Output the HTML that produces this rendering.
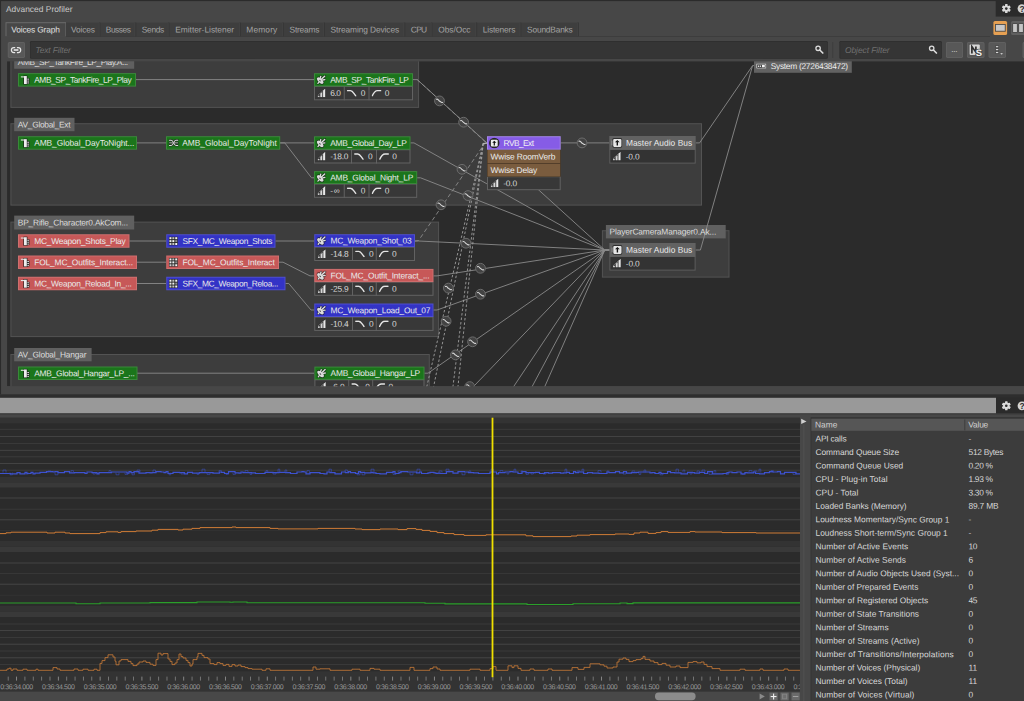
<!DOCTYPE html><html><head><meta charset='utf-8'><title>Advanced Profiler</title><style>

html,body{margin:0;padding:0;background:#484848;}
body{width:1024px;height:701px;overflow:hidden;position:relative;font-family:"Liberation Sans",sans-serif;font-size:8.4px;line-height:12px;}
#bg{position:absolute;left:0;top:0;}
.t{position:absolute;white-space:pre;height:12px;transform-origin:0 0;}
.clip{position:absolute;left:0;top:0;width:1024px;height:701px;}

</style></head><body>
<svg id='bg' width='1024' height='701' viewBox='0 0 1024 701'><rect x='0.00' y='0.00' width='1024.00' height='701.00' fill='#474747' />
<rect x='0.00' y='0.00' width='1024.00' height='1.10' fill='#2b2b2b' />
<rect x='0.00' y='0.00' width='1.05' height='394.30' fill='#2b2b2b' />
<rect x='995.70' y='0.00' width='28.30' height='16.60' fill='#2b2b2b' />
<g transform='translate(1006.3 8.6)'><rect x='-1.25' y='-4.50' width='2.5' height='2.8' rx='0.5' fill='#dadada' transform='rotate(0)'/><rect x='-1.25' y='-4.50' width='2.5' height='2.8' rx='0.5' fill='#dadada' transform='rotate(60)'/><rect x='-1.25' y='-4.50' width='2.5' height='2.8' rx='0.5' fill='#dadada' transform='rotate(120)'/><rect x='-1.25' y='-4.50' width='2.5' height='2.8' rx='0.5' fill='#dadada' transform='rotate(180)'/><rect x='-1.25' y='-4.50' width='2.5' height='2.8' rx='0.5' fill='#dadada' transform='rotate(240)'/><rect x='-1.25' y='-4.50' width='2.5' height='2.8' rx='0.5' fill='#dadada' transform='rotate(300)'/><circle r='3.20' fill='#dadada'/><circle r='1.3' fill='#2b2b2b'/></g>
<circle cx='1022' cy='8.6' r='4.4' fill='#d4d4d4'/>
<rect x='5.50' y='36.00' width='984.50' height='0.70' fill='#3a3a3a' />
<rect x='66.00' y='22.40' width='512.70' height='13.90' fill='#3e3e3e' />
<rect x='66.00' y='22.40' width='512.70' height='0.60' fill='#454545' />
<rect x='5.50' y='22.20' width='60.50' height='14.20' fill='#6a6a6a' />
<rect x='6.50' y='23.20' width='58.90' height='13.60' fill='#474747' />
<rect x='99.50' y='22.60' width='0.90' height='13.70' fill='#353535' />
<rect x='98.70' y='22.80' width='0.80' height='13.50' fill='#444444' />
<rect x='135.30' y='22.60' width='0.90' height='13.70' fill='#353535' />
<rect x='134.50' y='22.80' width='0.80' height='13.50' fill='#444444' />
<rect x='168.50' y='22.60' width='0.90' height='13.70' fill='#353535' />
<rect x='167.70' y='22.80' width='0.80' height='13.50' fill='#444444' />
<rect x='239.85' y='22.60' width='0.90' height='13.70' fill='#353535' />
<rect x='239.05' y='22.80' width='0.80' height='13.50' fill='#444444' />
<rect x='282.80' y='22.60' width='0.90' height='13.70' fill='#353535' />
<rect x='282.00' y='22.80' width='0.80' height='13.50' fill='#444444' />
<rect x='324.10' y='22.60' width='0.90' height='13.70' fill='#353535' />
<rect x='323.30' y='22.80' width='0.80' height='13.50' fill='#444444' />
<rect x='404.30' y='22.60' width='0.90' height='13.70' fill='#353535' />
<rect x='403.50' y='22.80' width='0.80' height='13.50' fill='#444444' />
<rect x='431.50' y='22.60' width='0.90' height='13.70' fill='#353535' />
<rect x='430.70' y='22.80' width='0.80' height='13.50' fill='#444444' />
<rect x='476.20' y='22.60' width='0.90' height='13.70' fill='#353535' />
<rect x='475.40' y='22.80' width='0.80' height='13.50' fill='#444444' />
<rect x='520.40' y='22.60' width='0.90' height='13.70' fill='#353535' />
<rect x='519.60' y='22.80' width='0.80' height='13.50' fill='#444444' />
<rect x='577.80' y='22.60' width='0.90' height='13.70' fill='#353535' />
<rect x='577.00' y='22.80' width='0.80' height='13.50' fill='#444444' />
<rect x='993.40' y='20.90' width='13.70' height='14.10' fill='#e6a052' rx='1.6' />
<rect x='995.00' y='24.00' width='10.70' height='7.70' fill='#4a4a4a' />
<rect x='995.90' y='24.90' width='8.90' height='5.90' fill='#c8c8c8' />
<rect x='1011.10' y='20.90' width='18.90' height='14.10' fill='#606060' rx='1.6' />
<rect x='1012.40' y='23.30' width='5.20' height='9.40' fill='#454545' />
<rect x='1013.10' y='24.00' width='3.80' height='8.00' fill='#c6c6c6' />
<rect x='1018.40' y='23.30' width='5.20' height='9.40' fill='#454545' />
<rect x='1019.10' y='24.00' width='3.80' height='8.00' fill='#c6c6c6' />
<rect x='7.80' y='42.10' width='17.20' height='15.80' fill='#636363' rx='1.6' />
<rect x='8.50' y='42.80' width='15.80' height='14.40' fill='#585858' rx='1.2' />
<g fill='none' stroke='#e6e6e6' stroke-width='1.25' stroke-linecap='butt'><path d='M15.2 47.5 H13.9 a2.5 2.5 0 0 0 0 5 H15.2'/><path d='M16.9 47.5 H18.2 a2.5 2.5 0 0 1 0 5 H16.9'/></g><path d='M13.7 50 H18.4' stroke='#f0f0f0' stroke-width='1.5'/>
<rect x='30.00' y='41.00' width='797.80' height='17.80' fill='#2e2e2e' rx='1.2' />
<rect x='30.70' y='41.70' width='796.40' height='16.40' fill='#353535' rx='0.8' />
<g transform='translate(819.4 49.6)'><circle cx='-1.3' cy='-1.3' r='2.2' fill='none' stroke='#dcdcdc' stroke-width='1.3'/><path d='M0.4 0.4 L3.4 3.4' stroke='#dcdcdc' stroke-width='1.7' stroke-linecap='round'/></g>
<rect x='832.30' y='42.00' width='0.90' height='16.00' fill='#3c3c3c' />
<rect x='839.40' y='41.00' width='102.40' height='17.80' fill='#2e2e2e' rx='1.2' />
<rect x='840.10' y='41.70' width='101.00' height='16.40' fill='#353535' rx='0.8' />
<g transform='translate(933 49.6)'><circle cx='-1.3' cy='-1.3' r='2.2' fill='none' stroke='#dcdcdc' stroke-width='1.3'/><path d='M0.4 0.4 L3.4 3.4' stroke='#dcdcdc' stroke-width='1.7' stroke-linecap='round'/></g>
<rect x='946.00' y='42.10' width='17.00' height='15.80' fill='#636363' rx='1.6' />
<rect x='946.70' y='42.80' width='15.60' height='14.40' fill='#585858' rx='1.2' />
<rect x='967.00' y='42.10' width='17.50' height='15.80' fill='#636363' rx='1.6' />
<rect x='967.70' y='42.80' width='16.10' height='14.40' fill='#585858' rx='1.2' />
<rect x='988.60' y='42.10' width='17.40' height='15.80' fill='#636363' rx='1.6' />
<rect x='989.30' y='42.80' width='16.00' height='14.40' fill='#585858' rx='1.2' />
<rect x='1022.60' y='42.10' width='17.40' height='15.80' fill='#636363' rx='1.6' />
<rect x='1023.30' y='42.80' width='16.00' height='14.40' fill='#585858' rx='1.2' />
<rect x='969.6' y='44.6' width='10.2' height='10.3' fill='#d6d6d6' rx='1'/><path d='M971.9 53.4 V46.6 L975.9 52.2 V46.4' fill='none' stroke='#2e2e2e' stroke-width='1.7' stroke-linejoin='miter'/>
<text x='975.7' y='56.1' font-family='Liberation Sans, sans-serif' font-weight='bold' font-size='9.4' fill='#f2f2f2' stroke='#4a4a4a' stroke-width='1.6' paint-order='stroke' transform='rotate(0.03 975 56)'>S</text>
<rect x='995.30' y='45.60' width='3.60' height='2.20' fill='#3c3c3c' />
<rect x='995.90' y='46.10' width='2.40' height='1.20' fill='#d6d6d6' />
<rect x='995.30' y='48.50' width='3.60' height='2.20' fill='#3c3c3c' />
<rect x='995.90' y='49.00' width='2.40' height='1.20' fill='#d6d6d6' />
<rect x='995.30' y='51.40' width='3.60' height='2.20' fill='#3c3c3c' />
<rect x='995.90' y='51.90' width='2.40' height='1.20' fill='#d6d6d6' />
<path d='M999.9 52.9 H1003.3 L1001.6 54.9 Z' fill='#e0e0e0' stroke='#484848' stroke-width='0.4'/>
<clipPath id='gc'><rect x='7.05' y='61.2' width='1016.95' height='325.0'/></clipPath><g clip-path='url(#gc)'>
<rect x='7.05' y='61.20' width='1016.95' height='325.00' fill='#2b2b2b' />
<rect x='10.40' y='40.00' width='408.70' height='67.90' fill='#535353' />
<rect x='11.40' y='41.00' width='406.70' height='65.90' fill='#3d3d3d' />
<rect x='14.20' y='55.30' width='120.00' height='13.45' fill='#606060' />
<rect x='10.40' y='123.20' width='691.60' height='82.40' fill='#535353' />
<rect x='11.40' y='124.20' width='689.60' height='80.40' fill='#3d3d3d' />
<rect x='14.20' y='117.80' width='60.30' height='13.40' fill='#606060' />
<rect x='10.40' y='221.60' width='428.70' height='115.50' fill='#535353' />
<rect x='11.40' y='222.60' width='426.70' height='113.50' fill='#3d3d3d' />
<rect x='14.20' y='215.60' width='120.00' height='13.90' fill='#606060' />
<rect x='10.40' y='354.00' width='419.40' height='66.00' fill='#535353' />
<rect x='11.40' y='355.00' width='417.40' height='64.00' fill='#3d3d3d' />
<rect x='14.20' y='348.00' width='77.40' height='13.30' fill='#606060' />
<rect x='601.90' y='230.20' width='127.60' height='47.40' fill='#535353' />
<rect x='602.90' y='231.20' width='125.60' height='45.40' fill='#3d3d3d' />
<rect x='605.90' y='225.00' width='119.80' height='13.40' fill='#606060' />
<path d='M136.0 79.6 L314.0 79.6' fill='none' stroke='#8a8a8a' stroke-width='0.9' />
<path d='M137.0 142.9 L166.0 142.9' fill='none' stroke='#8a8a8a' stroke-width='0.9' />
<path d='M280.0 142.9 L314.0 142.9' fill='none' stroke='#8a8a8a' stroke-width='0.9' />
<path d='M280.0 142.9 L284.8 142.9 L311.5 177.8 L314.0 177.8' fill='none' stroke='#8a8a8a' stroke-width='0.9' />
<path d='M129.5 241.0 L166.0 241.0' fill='none' stroke='#8a8a8a' stroke-width='0.9' />
<path d='M137.0 262.2 L166.0 262.2' fill='none' stroke='#8a8a8a' stroke-width='0.9' />
<path d='M137.0 283.5 L166.0 283.5' fill='none' stroke='#8a8a8a' stroke-width='0.9' />
<path d='M275.5 241.0 L314.0 241.0' fill='none' stroke='#8a8a8a' stroke-width='0.9' />
<path d='M279.0 262.2 L283.0 262.2 L310.0 275.9 L314.0 275.9' fill='none' stroke='#8a8a8a' stroke-width='0.9' />
<path d='M285.5 283.5 L288.8 283.5 L311.0 310.0 L314.0 310.0' fill='none' stroke='#8a8a8a' stroke-width='0.9' />
<path d='M137.0 373.2 L314.0 373.2' fill='none' stroke='#8a8a8a' stroke-width='0.9' />
<path d='M413.0 79.6 L417.2 79.6 L604.8 250.0 L609.5 250.0' fill='none' stroke='#8a8a8a' stroke-width='0.9' />
<path d='M410.5 142.9 L414.0 142.9 L604.8 250.0 L609.5 250.0' fill='none' stroke='#8a8a8a' stroke-width='0.9' />
<path d='M417.2 177.8 L420.5 177.8 L604.8 250.0 L609.5 250.0' fill='none' stroke='#8a8a8a' stroke-width='0.9' />
<path d='M415.0 241.0 L418.5 241.0 L604.8 250.0 L609.5 250.0' fill='none' stroke='#8a8a8a' stroke-width='0.9' />
<path d='M433.5 275.9 L437.0 275.9 L604.8 250.0 L609.5 250.0' fill='none' stroke='#8a8a8a' stroke-width='0.9' />
<path d='M433.5 310.0 L437.0 310.0 L604.8 250.0 L609.5 250.0' fill='none' stroke='#8a8a8a' stroke-width='0.9' />
<path d='M424.5 373.2 L428.0 373.2 L604.8 250.0 L609.5 250.0' fill='none' stroke='#8a8a8a' stroke-width='0.9' />
<path d='M434.8 426.8 L604.8 250.0' fill='none' stroke='#8a8a8a' stroke-width='0.9' />
<path d='M486.8 426.8 L604.8 250.0' fill='none' stroke='#8a8a8a' stroke-width='0.9' />
<path d='M510.7 426.8 L604.8 250.0' fill='none' stroke='#8a8a8a' stroke-width='0.9' />
<path d='M527.1 426.8 L604.8 250.0' fill='none' stroke='#8a8a8a' stroke-width='0.9' />
<path d='M560.7 142.9 L609.5 142.9' fill='none' stroke='#8a8a8a' stroke-width='0.9' />
<path d='M695.6 142.9 L699.6 142.9 L752.6 65.6 L754.5 65.6' fill='none' stroke='#8a8a8a' stroke-width='0.9' />
<path d='M695.6 250.0 L700.4 250.0 L752.6 65.6' fill='none' stroke='#8a8a8a' stroke-width='0.9' />
<path d='M417.2 79.6 L485.0 141.6 L487.5 141.6' fill='none' stroke='#8c8c8c' stroke-width='0.9' stroke-dasharray='4.2 2.6' />
<path d='M415.0 241.0 L418.5 240.6 L485.0 143.0 L487.5 143.0' fill='none' stroke='#8c8c8c' stroke-width='0.9' stroke-dasharray='4.2 2.8' />
<path d='M483.2 143.4 L421.3 410.3' fill='none' stroke='#a0a0a0' stroke-width='0.9' stroke-dasharray='2.5 2.0' />
<path d='M483.2 143.4 L428.8 410.3' fill='none' stroke='#a0a0a0' stroke-width='0.9' stroke-dasharray='2.5 2.0' />
<path d='M483.2 143.4 L450.0 410.3' fill='none' stroke='#a0a0a0' stroke-width='0.9' stroke-dasharray='2.5 2.0' />
<path d='M483.2 143.4 L455.5 410.3' fill='none' stroke='#a0a0a0' stroke-width='0.9' stroke-dasharray='2.5 2.0' />
<path d='M483.2 143.4 L487.5 143.2' fill='none' stroke='#bdbdbd' stroke-width='1' />
<g transform='translate(439.5 100.9)'><circle r='4.9' fill='#434343' stroke='#6c6c6c' stroke-width='1'/><path d='M-3 -1.6 C-1.4 -2.6 -0.6 0.2 0 0.2 C0.8 0.2 1.6 2.4 3.1 1.5' fill='none' stroke='#dcdcdc' stroke-width='1.05' stroke-linecap='round'/></g>
<g transform='translate(463.6 122.2)'><circle r='4.9' fill='#434343' stroke='#6c6c6c' stroke-width='1'/><path d='M-3 -1.6 C-1.4 -2.6 -0.6 0.2 0 0.2 C0.8 0.2 1.6 2.4 3.1 1.5' fill='none' stroke='#dcdcdc' stroke-width='1.05' stroke-linecap='round'/></g>
<g transform='translate(462.0 169.3)'><circle r='4.9' fill='#434343' stroke='#6c6c6c' stroke-width='1'/><path d='M-3 -1.6 C-1.4 -2.6 -0.6 0.2 0 0.2 C0.8 0.2 1.6 2.4 3.1 1.5' fill='none' stroke='#dcdcdc' stroke-width='1.05' stroke-linecap='round'/></g>
<g transform='translate(468.0 195.6)'><circle r='4.9' fill='#434343' stroke='#6c6c6c' stroke-width='1'/><path d='M-3 -1.6 C-1.4 -2.6 -0.6 0.2 0 0.2 C0.8 0.2 1.6 2.4 3.1 1.5' fill='none' stroke='#dcdcdc' stroke-width='1.05' stroke-linecap='round'/></g>
<g transform='translate(441.0 204.8)'><circle r='4.9' fill='#434343' stroke='#6c6c6c' stroke-width='1'/><path d='M-3 -1.6 C-1.4 -2.6 -0.6 0.2 0 0.2 C0.8 0.2 1.6 2.4 3.1 1.5' fill='none' stroke='#dcdcdc' stroke-width='1.05' stroke-linecap='round'/></g>
<g transform='translate(582.0 142.9)'><circle r='4.9' fill='#434343' stroke='#6c6c6c' stroke-width='1'/><path d='M-3 -1.6 C-1.4 -2.6 -0.6 0.2 0 0.2 C0.8 0.2 1.6 2.4 3.1 1.5' fill='none' stroke='#dcdcdc' stroke-width='1.05' stroke-linecap='round'/></g>
<g transform='translate(466.0 243.2)'><circle r='4.9' fill='#434343' stroke='#6c6c6c' stroke-width='1'/><path d='M-3 -1.6 C-1.4 -2.6 -0.6 0.2 0 0.2 C0.8 0.2 1.6 2.4 3.1 1.5' fill='none' stroke='#dcdcdc' stroke-width='1.05' stroke-linecap='round'/></g>
<g transform='translate(480.5 268.3)'><circle r='4.9' fill='#434343' stroke='#6c6c6c' stroke-width='1'/><path d='M-3 -1.6 C-1.4 -2.6 -0.6 0.2 0 0.2 C0.8 0.2 1.6 2.4 3.1 1.5' fill='none' stroke='#dcdcdc' stroke-width='1.05' stroke-linecap='round'/></g>
<g transform='translate(448.4 288.1)'><circle r='4.9' fill='#434343' stroke='#6c6c6c' stroke-width='1'/><path d='M-3 -1.6 C-1.4 -2.6 -0.6 0.2 0 0.2 C0.8 0.2 1.6 2.4 3.1 1.5' fill='none' stroke='#dcdcdc' stroke-width='1.05' stroke-linecap='round'/></g>
<g transform='translate(480.5 294.2)'><circle r='4.9' fill='#434343' stroke='#6c6c6c' stroke-width='1'/><path d='M-3 -1.6 C-1.4 -2.6 -0.6 0.2 0 0.2 C0.8 0.2 1.6 2.4 3.1 1.5' fill='none' stroke='#dcdcdc' stroke-width='1.05' stroke-linecap='round'/></g>
<g transform='translate(446.1 321.2)'><circle r='4.9' fill='#434343' stroke='#6c6c6c' stroke-width='1'/><path d='M-3 -1.6 C-1.4 -2.6 -0.6 0.2 0 0.2 C0.8 0.2 1.6 2.4 3.1 1.5' fill='none' stroke='#dcdcdc' stroke-width='1.05' stroke-linecap='round'/></g>
<g transform='translate(472.6 341.8)'><circle r='4.9' fill='#434343' stroke='#6c6c6c' stroke-width='1'/><path d='M-3 -1.6 C-1.4 -2.6 -0.6 0.2 0 0.2 C0.8 0.2 1.6 2.4 3.1 1.5' fill='none' stroke='#dcdcdc' stroke-width='1.05' stroke-linecap='round'/></g>
<g transform='translate(455.5 354.9)'><circle r='4.9' fill='#434343' stroke='#6c6c6c' stroke-width='1'/><path d='M-3 -1.6 C-1.4 -2.6 -0.6 0.2 0 0.2 C0.8 0.2 1.6 2.4 3.1 1.5' fill='none' stroke='#dcdcdc' stroke-width='1.05' stroke-linecap='round'/></g>
<g transform='translate(469.7 386.6)'><circle r='4.9' fill='#434343' stroke='#6c6c6c' stroke-width='1'/><path d='M-3 -1.6 C-1.4 -2.6 -0.6 0.2 0 0.2 C0.8 0.2 1.6 2.4 3.1 1.5' fill='none' stroke='#dcdcdc' stroke-width='1.05' stroke-linecap='round'/></g>
<rect x='18.00' y='73.10' width='118.00' height='13.50' fill='#3a883a' />
<rect x='19.00' y='74.10' width='116.00' height='11.50' fill='#1b751b' />
<svg x='20.40' y='74.95' width="10" height="10" viewBox="0 0 10 10" ><rect x='3' y='0.6' width='4' height='9' fill='#1c1c1c'/><rect x='3.6' y='1.1' width='2.8' height='8' fill='#ededed'/><rect x='0.4' y='1.4' width='3.2' height='1.1' fill='#e0e0e0'/><rect x='6.6' y='3.2' width='2.4' height='5.8' fill='#1c1c1c'/><rect x='6.9' y='3.7' width='1.7' height='1' fill='#dcdcdc'/><rect x='6.9' y='5.6' width='1.7' height='1' fill='#dcdcdc'/><rect x='6.9' y='7.5' width='1.7' height='1' fill='#dcdcdc'/></svg>
<rect x='314.00' y='85.90' width='99.00' height='14.40' fill='#626262' />
<rect x='315.00' y='86.90' width='97.00' height='12.40' fill='#383838' />
<rect x='343.75' y='86.40' width='1.00' height='13.90' fill='#626262' />
<rect x='368.50' y='86.40' width='1.00' height='13.90' fill='#626262' />
<svg x='317.60' y='88.55' width="8" height="8.8" viewBox="0 0 8 8.8" ><g transform='scale(1 1.1)'><path d='M-0.5 8.5 L-0.5 5.9 L5.2 1.0 L8.3 -0.7 L8.3 8.5 Z' fill='#1e1e1e' opacity='0.4'/><path d='M0 8 L0 6.5 L1.9 6.5 L1.9 8 Z' fill='#c8c8c8'/><path d='M2.7 8 L2.7 4.6 L4.7 3.2 L4.7 8 Z' fill='#d6d6d6'/><path d='M5.5 8 L5.5 1.8 L7.7 0 L7.7 8 Z' fill='#e8e8e8'/><path d='M0 6.4 L5.6 1.7' stroke='#c8c8c8' stroke-width='0.4'/></g></svg>
<svg x='346.85' y='89.65' width="10" height="7" viewBox="0 0 10 7" ><path d='M0.6 1.0 H3.6 C5.8 1.0 6.4 3.0 8.9 6.2' fill='none' stroke='#e4e4e4' stroke-width='1.4' stroke-linecap='round'/></svg>
<svg x='371.60' y='89.65' width="10" height="7" viewBox="0 0 10 7" ><path d='M0.7 6.2 C2.2 2.6 3.6 1.0 6 1.0 H9.2' fill='none' stroke='#e4e4e4' stroke-width='1.4' stroke-linecap='round'/></svg>
<rect x='314.00' y='73.20' width='99.00' height='13.20' fill='#3a883a' />
<rect x='315.00' y='74.20' width='97.00' height='11.20' fill='#1b751b' />
<svg x='316.40' y='74.90' width="10" height="10" viewBox="0 0 10 10" ><g opacity='0.7'><ellipse cx='3.8' cy='5.7' rx='4.1' ry='2.0' transform='rotate(45 3.8 5.7)' fill='#1b1b1b' stroke='#1b1b1b' stroke-width='1.5'/><path d='M5.0 4.4 L8.3 1.3' stroke='#1b1b1b' stroke-width='2.8' stroke-linecap='round'/><path d='M3.7 3.6 L4.4 1.4' stroke='#1b1b1b' stroke-width='2.4' stroke-linecap='round'/><path d='M6.3 5.1 L8.5 4.7' stroke='#1b1b1b' stroke-width='2.4' stroke-linecap='round'/><path d='M2.4 7.4 L1.5 8.5' stroke='#1b1b1b' stroke-width='2.4' stroke-linecap='round'/></g><ellipse cx='3.8' cy='5.7' rx='4.1' ry='2.0' transform='rotate(45 3.8 5.7)' fill='#dcdcdc'/><path d='M5.0 4.4 L8.3 1.3' stroke='#dedede' stroke-width='1.4' stroke-linecap='round'/><path d='M3.7 3.6 L4.4 1.4' stroke='#dedede' stroke-width='1.3' stroke-linecap='round'/><path d='M6.3 5.1 L8.5 4.7' stroke='#dedede' stroke-width='1.3' stroke-linecap='round'/><path d='M2.4 7.4 L1.5 8.5' stroke='#dedede' stroke-width='1.3' stroke-linecap='round'/><ellipse cx='3.6' cy='5.7' rx='1.0' ry='0.6' transform='rotate(45 3.6 5.7)' fill='#4a4a4a'/></svg>
<rect x='18.00' y='136.20' width='119.00' height='13.50' fill='#3a883a' />
<rect x='19.00' y='137.20' width='117.00' height='11.50' fill='#1b751b' />
<svg x='20.40' y='138.05' width="10" height="10" viewBox="0 0 10 10" ><rect x='3' y='0.6' width='4' height='9' fill='#1c1c1c'/><rect x='3.6' y='1.1' width='2.8' height='8' fill='#ededed'/><rect x='0.4' y='1.4' width='3.2' height='1.1' fill='#e0e0e0'/><rect x='6.6' y='3.2' width='2.4' height='5.8' fill='#1c1c1c'/><rect x='6.9' y='3.7' width='1.7' height='1' fill='#dcdcdc'/><rect x='6.9' y='5.6' width='1.7' height='1' fill='#dcdcdc'/><rect x='6.9' y='7.5' width='1.7' height='1' fill='#dcdcdc'/></svg>
<rect x='166.00' y='136.20' width='114.20' height='13.50' fill='#3a883a' />
<rect x='167.00' y='137.20' width='112.20' height='11.50' fill='#1b751b' />
<svg x='168.60' y='139.05' width="10" height="8" viewBox="0 0 10 8" ><g fill='none' stroke='#222' stroke-width='2.3' stroke-linecap='round' opacity='0.8'><path d='M0.8 1.2 H2.6 C5 1.2 5 6.4 7.4 6.4 H9.2'/><path d='M0.8 6.4 H2.6 C5 6.4 5 1.2 7.4 1.2 H9.2'/><path d='M0.6 3.8 H9.4'/></g><g fill='none' stroke='#dadada' stroke-width='1.05' stroke-linecap='round'><path d='M0.8 1.2 H2.6 C5 1.2 5 6.4 7.4 6.4 H9.2'/><path d='M0.8 6.4 H2.6 C5 6.4 5 1.2 7.4 1.2 H9.2'/></g><path d='M0.6 3.8 H9.4' stroke='#b8b8b8' stroke-width='0.9'/></svg>
<rect x='314.00' y='149.25' width='96.50' height='14.25' fill='#626262' />
<rect x='315.00' y='150.25' width='94.50' height='12.25' fill='#383838' />
<rect x='351.00' y='149.75' width='1.00' height='13.75' fill='#626262' />
<rect x='376.00' y='149.75' width='1.00' height='13.75' fill='#626262' />
<svg x='317.60' y='151.82' width="8" height="8.8" viewBox="0 0 8 8.8" ><g transform='scale(1 1.1)'><path d='M-0.5 8.5 L-0.5 5.9 L5.2 1.0 L8.3 -0.7 L8.3 8.5 Z' fill='#1e1e1e' opacity='0.4'/><path d='M0 8 L0 6.5 L1.9 6.5 L1.9 8 Z' fill='#c8c8c8'/><path d='M2.7 8 L2.7 4.6 L4.7 3.2 L4.7 8 Z' fill='#d6d6d6'/><path d='M5.5 8 L5.5 1.8 L7.7 0 L7.7 8 Z' fill='#e8e8e8'/><path d='M0 6.4 L5.6 1.7' stroke='#c8c8c8' stroke-width='0.4'/></g></svg>
<svg x='354.10' y='152.93' width="10" height="7" viewBox="0 0 10 7" ><path d='M0.6 1.0 H3.6 C5.8 1.0 6.4 3.0 8.9 6.2' fill='none' stroke='#e4e4e4' stroke-width='1.4' stroke-linecap='round'/></svg>
<svg x='379.10' y='152.93' width="10" height="7" viewBox="0 0 10 7" ><path d='M0.7 6.2 C2.2 2.6 3.6 1.0 6 1.0 H9.2' fill='none' stroke='#e4e4e4' stroke-width='1.4' stroke-linecap='round'/></svg>
<rect x='314.00' y='136.30' width='96.50' height='13.45' fill='#3a883a' />
<rect x='315.00' y='137.30' width='94.50' height='11.45' fill='#1b751b' />
<svg x='316.40' y='138.12' width="10" height="10" viewBox="0 0 10 10" ><g opacity='0.7'><ellipse cx='3.8' cy='5.7' rx='4.1' ry='2.0' transform='rotate(45 3.8 5.7)' fill='#1b1b1b' stroke='#1b1b1b' stroke-width='1.5'/><path d='M5.0 4.4 L8.3 1.3' stroke='#1b1b1b' stroke-width='2.8' stroke-linecap='round'/><path d='M3.7 3.6 L4.4 1.4' stroke='#1b1b1b' stroke-width='2.4' stroke-linecap='round'/><path d='M6.3 5.1 L8.5 4.7' stroke='#1b1b1b' stroke-width='2.4' stroke-linecap='round'/><path d='M2.4 7.4 L1.5 8.5' stroke='#1b1b1b' stroke-width='2.4' stroke-linecap='round'/></g><ellipse cx='3.8' cy='5.7' rx='4.1' ry='2.0' transform='rotate(45 3.8 5.7)' fill='#dcdcdc'/><path d='M5.0 4.4 L8.3 1.3' stroke='#dedede' stroke-width='1.4' stroke-linecap='round'/><path d='M3.7 3.6 L4.4 1.4' stroke='#dedede' stroke-width='1.3' stroke-linecap='round'/><path d='M6.3 5.1 L8.5 4.7' stroke='#dedede' stroke-width='1.3' stroke-linecap='round'/><path d='M2.4 7.4 L1.5 8.5' stroke='#dedede' stroke-width='1.3' stroke-linecap='round'/><ellipse cx='3.6' cy='5.7' rx='1.0' ry='0.6' transform='rotate(45 3.6 5.7)' fill='#4a4a4a'/></svg>
<rect x='314.00' y='183.55' width='103.20' height='14.25' fill='#626262' />
<rect x='315.00' y='184.55' width='101.20' height='12.25' fill='#383838' />
<rect x='343.75' y='184.05' width='1.00' height='13.75' fill='#626262' />
<rect x='368.50' y='184.05' width='1.00' height='13.75' fill='#626262' />
<svg x='317.60' y='186.12' width="8" height="8.8" viewBox="0 0 8 8.8" ><g transform='scale(1 1.1)'><path d='M-0.5 8.5 L-0.5 5.9 L5.2 1.0 L8.3 -0.7 L8.3 8.5 Z' fill='#1e1e1e' opacity='0.4'/><path d='M0 8 L0 6.5 L1.9 6.5 L1.9 8 Z' fill='#c8c8c8'/><path d='M2.7 8 L2.7 4.6 L4.7 3.2 L4.7 8 Z' fill='#d6d6d6'/><path d='M5.5 8 L5.5 1.8 L7.7 0 L7.7 8 Z' fill='#e8e8e8'/><path d='M0 6.4 L5.6 1.7' stroke='#c8c8c8' stroke-width='0.4'/></g></svg>
<svg x='346.85' y='187.22' width="10" height="7" viewBox="0 0 10 7" ><path d='M0.6 1.0 H3.6 C5.8 1.0 6.4 3.0 8.9 6.2' fill='none' stroke='#e4e4e4' stroke-width='1.4' stroke-linecap='round'/></svg>
<svg x='371.60' y='187.22' width="10" height="7" viewBox="0 0 10 7" ><path d='M0.7 6.2 C2.2 2.6 3.6 1.0 6 1.0 H9.2' fill='none' stroke='#e4e4e4' stroke-width='1.4' stroke-linecap='round'/></svg>
<rect x='314.00' y='171.10' width='103.20' height='12.95' fill='#3a883a' />
<rect x='315.00' y='172.10' width='101.20' height='10.95' fill='#1b751b' />
<svg x='316.40' y='172.67' width="10" height="10" viewBox="0 0 10 10" ><g opacity='0.7'><ellipse cx='3.8' cy='5.7' rx='4.1' ry='2.0' transform='rotate(45 3.8 5.7)' fill='#1b1b1b' stroke='#1b1b1b' stroke-width='1.5'/><path d='M5.0 4.4 L8.3 1.3' stroke='#1b1b1b' stroke-width='2.8' stroke-linecap='round'/><path d='M3.7 3.6 L4.4 1.4' stroke='#1b1b1b' stroke-width='2.4' stroke-linecap='round'/><path d='M6.3 5.1 L8.5 4.7' stroke='#1b1b1b' stroke-width='2.4' stroke-linecap='round'/><path d='M2.4 7.4 L1.5 8.5' stroke='#1b1b1b' stroke-width='2.4' stroke-linecap='round'/></g><ellipse cx='3.8' cy='5.7' rx='4.1' ry='2.0' transform='rotate(45 3.8 5.7)' fill='#dcdcdc'/><path d='M5.0 4.4 L8.3 1.3' stroke='#dedede' stroke-width='1.4' stroke-linecap='round'/><path d='M3.7 3.6 L4.4 1.4' stroke='#dedede' stroke-width='1.3' stroke-linecap='round'/><path d='M6.3 5.1 L8.5 4.7' stroke='#dedede' stroke-width='1.3' stroke-linecap='round'/><path d='M2.4 7.4 L1.5 8.5' stroke='#dedede' stroke-width='1.3' stroke-linecap='round'/><ellipse cx='3.6' cy='5.7' rx='1.0' ry='0.6' transform='rotate(45 3.6 5.7)' fill='#4a4a4a'/></svg>
<rect x='487.00' y='176.20' width='73.70' height='14.00' fill='#626262' />
<rect x='488.00' y='177.20' width='71.70' height='12.00' fill='#383838' />
<svg x='490.70' y='178.40' width="8" height="8.8" viewBox="0 0 8 8.8" ><g transform='scale(1 1.1)'><path d='M-0.5 8.5 L-0.5 5.9 L5.2 1.0 L8.3 -0.7 L8.3 8.5 Z' fill='#1e1e1e' opacity='0.4'/><path d='M0 8 L0 6.5 L1.9 6.5 L1.9 8 Z' fill='#c8c8c8'/><path d='M2.7 8 L2.7 4.6 L4.7 3.2 L4.7 8 Z' fill='#d6d6d6'/><path d='M5.5 8 L5.5 1.8 L7.7 0 L7.7 8 Z' fill='#e8e8e8'/><path d='M0 6.4 L5.6 1.7' stroke='#c8c8c8' stroke-width='0.4'/></g></svg>
<rect x='487.00' y='149.40' width='73.70' height='27.40' fill='#4a3826' />
<rect x='487.60' y='150.00' width='72.50' height='13.00' fill='#7a5c3e' />
<rect x='487.60' y='163.80' width='72.50' height='12.60' fill='#7a5c3e' />
<rect x='487.00' y='136.20' width='73.70' height='13.50' fill='#a484ec' />
<rect x='488.00' y='137.20' width='71.70' height='11.50' fill='#865ce6' />
<svg x='488.80' y='137.50' width="11" height="11" viewBox="0 0 11 11" ><circle cx='5.5' cy='5.5' r='5.3' fill='#262626'/><rect x='2.1' y='2.3' width='6.8' height='6.6' rx='1' fill='#efefef'/><path d='M5.5 3.2 L7.6 5.3 H6.1 V8 H4.9 V5.3 H3.4 Z' fill='#111'/></svg>
<rect x='609.30' y='149.00' width='86.40' height='14.60' fill='#5c5c5c' />
<rect x='610.30' y='150.00' width='84.40' height='12.60' fill='#333333' />
<svg x='612.90' y='151.70' width="8" height="8.8" viewBox="0 0 8 8.8" ><g transform='scale(1 1.1)'><path d='M-0.5 8.5 L-0.5 5.9 L5.2 1.0 L8.3 -0.7 L8.3 8.5 Z' fill='#1e1e1e' opacity='0.4'/><path d='M0 8 L0 6.5 L1.9 6.5 L1.9 8 Z' fill='#c8c8c8'/><path d='M2.7 8 L2.7 4.6 L4.7 3.2 L4.7 8 Z' fill='#d6d6d6'/><path d='M5.5 8 L5.5 1.8 L7.7 0 L7.7 8 Z' fill='#e8e8e8'/><path d='M0 6.4 L5.6 1.7' stroke='#c8c8c8' stroke-width='0.4'/></g></svg>
<rect x='609.30' y='136.00' width='86.40' height='13.50' fill='#626262' />
<svg x='611.50' y='137.90' width="11" height="10" viewBox="0 0 11 10" ><rect x='0' y='2.6' width='2' height='4.8' fill='#d8d8d8'/><rect x='0.8' y='0.2' width='10' height='9.6' rx='1.6' fill='#303030'/><rect x='1.7' y='1.0' width='8.2' height='8.0' rx='1.1' fill='#e6e6e6'/><path d='M5.8 2.0 L8.2 4.4 H6.5 V7.6 H5.1 V4.4 H3.4 Z' fill='#151515'/></svg>
<rect x='609.40' y='256.00' width='86.20' height='14.60' fill='#5c5c5c' />
<rect x='610.40' y='257.00' width='84.20' height='12.60' fill='#333333' />
<svg x='613.00' y='258.70' width="8" height="8.8" viewBox="0 0 8 8.8" ><g transform='scale(1 1.1)'><path d='M-0.5 8.5 L-0.5 5.9 L5.2 1.0 L8.3 -0.7 L8.3 8.5 Z' fill='#1e1e1e' opacity='0.4'/><path d='M0 8 L0 6.5 L1.9 6.5 L1.9 8 Z' fill='#c8c8c8'/><path d='M2.7 8 L2.7 4.6 L4.7 3.2 L4.7 8 Z' fill='#d6d6d6'/><path d='M5.5 8 L5.5 1.8 L7.7 0 L7.7 8 Z' fill='#e8e8e8'/><path d='M0 6.4 L5.6 1.7' stroke='#c8c8c8' stroke-width='0.4'/></g></svg>
<rect x='609.40' y='243.00' width='86.20' height='13.50' fill='#626262' />
<svg x='611.60' y='244.90' width="11" height="10" viewBox="0 0 11 10" ><rect x='0' y='2.6' width='2' height='4.8' fill='#d8d8d8'/><rect x='0.8' y='0.2' width='10' height='9.6' rx='1.6' fill='#303030'/><rect x='1.7' y='1.0' width='8.2' height='8.0' rx='1.1' fill='#e6e6e6'/><path d='M5.8 2.0 L8.2 4.4 H6.5 V7.6 H5.1 V4.4 H3.4 Z' fill='#151515'/></svg>
<rect x='754.00' y='59.40' width='97.80' height='13.40' fill='#626262' />
<svg x='756.30' y='63.60' width="10" height="5" viewBox="0 0 10 5" ><rect x='0' y='0' width='10' height='5' fill='#f0f0f0'/><rect x='0.8' y='0.8' width='8.4' height='3.4' fill='#303030'/><rect x='1.5' y='1.9' width='1.3' height='1.4' fill='#f2f2f2'/><rect x='3.4' y='1.9' width='1.3' height='1.4' fill='#f2f2f2'/><rect x='5.6' y='1.3' width='2.9' height='2.4' fill='#f2f2f2'/></svg>
<rect x='18.00' y='234.25' width='111.50' height='13.50' fill='#ce6f6f' />
<rect x='19.00' y='235.25' width='109.50' height='11.50' fill='#c75858' />
<svg x='20.40' y='236.10' width="10" height="10" viewBox="0 0 10 10" ><rect x='3' y='0.6' width='4' height='9' fill='#1c1c1c'/><rect x='3.6' y='1.1' width='2.8' height='8' fill='#ededed'/><rect x='0.4' y='1.4' width='3.2' height='1.1' fill='#e0e0e0'/><rect x='6.6' y='3.2' width='2.4' height='5.8' fill='#1c1c1c'/><rect x='6.9' y='3.7' width='1.7' height='1' fill='#dcdcdc'/><rect x='6.9' y='5.6' width='1.7' height='1' fill='#dcdcdc'/><rect x='6.9' y='7.5' width='1.7' height='1' fill='#dcdcdc'/></svg>
<rect x='18.00' y='255.50' width='119.00' height='13.50' fill='#ce6f6f' />
<rect x='19.00' y='256.50' width='117.00' height='11.50' fill='#c75858' />
<svg x='20.40' y='257.35' width="10" height="10" viewBox="0 0 10 10" ><rect x='3' y='0.6' width='4' height='9' fill='#1c1c1c'/><rect x='3.6' y='1.1' width='2.8' height='8' fill='#ededed'/><rect x='0.4' y='1.4' width='3.2' height='1.1' fill='#e0e0e0'/><rect x='6.6' y='3.2' width='2.4' height='5.8' fill='#1c1c1c'/><rect x='6.9' y='3.7' width='1.7' height='1' fill='#dcdcdc'/><rect x='6.9' y='5.6' width='1.7' height='1' fill='#dcdcdc'/><rect x='6.9' y='7.5' width='1.7' height='1' fill='#dcdcdc'/></svg>
<rect x='18.00' y='276.75' width='119.00' height='13.50' fill='#ce6f6f' />
<rect x='19.00' y='277.75' width='117.00' height='11.50' fill='#c75858' />
<svg x='20.40' y='278.60' width="10" height="10" viewBox="0 0 10 10" ><rect x='3' y='0.6' width='4' height='9' fill='#1c1c1c'/><rect x='3.6' y='1.1' width='2.8' height='8' fill='#ededed'/><rect x='0.4' y='1.4' width='3.2' height='1.1' fill='#e0e0e0'/><rect x='6.6' y='3.2' width='2.4' height='5.8' fill='#1c1c1c'/><rect x='6.9' y='3.7' width='1.7' height='1' fill='#dcdcdc'/><rect x='6.9' y='5.6' width='1.7' height='1' fill='#dcdcdc'/><rect x='6.9' y='7.5' width='1.7' height='1' fill='#dcdcdc'/></svg>
<rect x='166.25' y='234.25' width='109.25' height='13.50' fill='#4f4fcd' />
<rect x='167.25' y='235.25' width='107.25' height='11.50' fill='#3333c6' />
<svg x='168.85' y='236.60' width="9" height="9" viewBox="0 0 9 9" ><rect x='0' y='0' width='9' height='9' fill='#262626'/><rect x='0.6' y='0.6' width='2' height='2' fill='#f4f4f4'/><rect x='3.5' y='0.6' width='2' height='2' fill='#bdbdbd'/><rect x='6.4' y='0.6' width='2' height='2' fill='#f4f4f4'/><rect x='0.6' y='3.5' width='2' height='2' fill='#ececec'/><rect x='3.5' y='3.5' width='2' height='2' fill='#f4f4f4'/><rect x='6.4' y='3.5' width='2' height='2' fill='#8c8c8c'/><rect x='0.6' y='6.4' width='2' height='2' fill='#cfcfcf'/><rect x='3.5' y='6.4' width='2' height='2' fill='#c4c4c4'/><rect x='6.4' y='6.4' width='2' height='2' fill='#f4f4f4'/></svg>
<rect x='166.25' y='255.50' width='112.75' height='13.50' fill='#ce6f6f' />
<rect x='167.25' y='256.50' width='110.75' height='11.50' fill='#c75858' />
<svg x='168.85' y='257.85' width="9" height="9" viewBox="0 0 9 9" ><rect x='0' y='0' width='9' height='9' fill='#262626'/><rect x='0.6' y='0.6' width='2' height='2' fill='#f4f4f4'/><rect x='3.5' y='0.6' width='2' height='2' fill='#bdbdbd'/><rect x='6.4' y='0.6' width='2' height='2' fill='#f4f4f4'/><rect x='0.6' y='3.5' width='2' height='2' fill='#ececec'/><rect x='3.5' y='3.5' width='2' height='2' fill='#f4f4f4'/><rect x='6.4' y='3.5' width='2' height='2' fill='#8c8c8c'/><rect x='0.6' y='6.4' width='2' height='2' fill='#cfcfcf'/><rect x='3.5' y='6.4' width='2' height='2' fill='#c4c4c4'/><rect x='6.4' y='6.4' width='2' height='2' fill='#f4f4f4'/></svg>
<rect x='166.25' y='276.75' width='119.25' height='13.50' fill='#4f4fcd' />
<rect x='167.25' y='277.75' width='117.25' height='11.50' fill='#3333c6' />
<svg x='168.85' y='279.10' width="9" height="9" viewBox="0 0 9 9" ><rect x='0' y='0' width='9' height='9' fill='#262626'/><rect x='0.6' y='0.6' width='2' height='2' fill='#f4f4f4'/><rect x='3.5' y='0.6' width='2' height='2' fill='#bdbdbd'/><rect x='6.4' y='0.6' width='2' height='2' fill='#f4f4f4'/><rect x='0.6' y='3.5' width='2' height='2' fill='#ececec'/><rect x='3.5' y='3.5' width='2' height='2' fill='#f4f4f4'/><rect x='6.4' y='3.5' width='2' height='2' fill='#8c8c8c'/><rect x='0.6' y='6.4' width='2' height='2' fill='#cfcfcf'/><rect x='3.5' y='6.4' width='2' height='2' fill='#c4c4c4'/><rect x='6.4' y='6.4' width='2' height='2' fill='#f4f4f4'/></svg>
<rect x='314.25' y='246.60' width='100.75' height='14.40' fill='#626262' />
<rect x='315.25' y='247.60' width='98.75' height='12.40' fill='#383838' />
<rect x='352.00' y='247.10' width='1.00' height='13.90' fill='#626262' />
<rect x='375.75' y='247.10' width='1.00' height='13.90' fill='#626262' />
<svg x='317.85' y='249.25' width="8" height="8.8" viewBox="0 0 8 8.8" ><g transform='scale(1 1.1)'><path d='M-0.5 8.5 L-0.5 5.9 L5.2 1.0 L8.3 -0.7 L8.3 8.5 Z' fill='#1e1e1e' opacity='0.4'/><path d='M0 8 L0 6.5 L1.9 6.5 L1.9 8 Z' fill='#c8c8c8'/><path d='M2.7 8 L2.7 4.6 L4.7 3.2 L4.7 8 Z' fill='#d6d6d6'/><path d='M5.5 8 L5.5 1.8 L7.7 0 L7.7 8 Z' fill='#e8e8e8'/><path d='M0 6.4 L5.6 1.7' stroke='#c8c8c8' stroke-width='0.4'/></g></svg>
<svg x='355.10' y='250.35' width="10" height="7" viewBox="0 0 10 7" ><path d='M0.6 1.0 H3.6 C5.8 1.0 6.4 3.0 8.9 6.2' fill='none' stroke='#e4e4e4' stroke-width='1.4' stroke-linecap='round'/></svg>
<svg x='378.85' y='250.35' width="10" height="7" viewBox="0 0 10 7" ><path d='M0.7 6.2 C2.2 2.6 3.6 1.0 6 1.0 H9.2' fill='none' stroke='#e4e4e4' stroke-width='1.4' stroke-linecap='round'/></svg>
<rect x='314.25' y='234.20' width='100.75' height='12.90' fill='#4f4fcd' />
<rect x='315.25' y='235.20' width='98.75' height='10.90' fill='#3333c6' />
<svg x='316.65' y='235.75' width="10" height="10" viewBox="0 0 10 10" ><g opacity='0.7'><ellipse cx='3.8' cy='5.7' rx='4.1' ry='2.0' transform='rotate(45 3.8 5.7)' fill='#1b1b1b' stroke='#1b1b1b' stroke-width='1.5'/><path d='M5.0 4.4 L8.3 1.3' stroke='#1b1b1b' stroke-width='2.8' stroke-linecap='round'/><path d='M3.7 3.6 L4.4 1.4' stroke='#1b1b1b' stroke-width='2.4' stroke-linecap='round'/><path d='M6.3 5.1 L8.5 4.7' stroke='#1b1b1b' stroke-width='2.4' stroke-linecap='round'/><path d='M2.4 7.4 L1.5 8.5' stroke='#1b1b1b' stroke-width='2.4' stroke-linecap='round'/></g><ellipse cx='3.8' cy='5.7' rx='4.1' ry='2.0' transform='rotate(45 3.8 5.7)' fill='#dcdcdc'/><path d='M5.0 4.4 L8.3 1.3' stroke='#dedede' stroke-width='1.4' stroke-linecap='round'/><path d='M3.7 3.6 L4.4 1.4' stroke='#dedede' stroke-width='1.3' stroke-linecap='round'/><path d='M6.3 5.1 L8.5 4.7' stroke='#dedede' stroke-width='1.3' stroke-linecap='round'/><path d='M2.4 7.4 L1.5 8.5' stroke='#dedede' stroke-width='1.3' stroke-linecap='round'/><ellipse cx='3.6' cy='5.7' rx='1.0' ry='0.6' transform='rotate(45 3.6 5.7)' fill='#4a4a4a'/></svg>
<rect x='314.25' y='281.60' width='119.25' height='14.20' fill='#626262' />
<rect x='315.25' y='282.60' width='117.25' height='12.20' fill='#383838' />
<rect x='352.00' y='282.10' width='1.00' height='13.70' fill='#626262' />
<rect x='375.75' y='282.10' width='1.00' height='13.70' fill='#626262' />
<svg x='317.85' y='284.15' width="8" height="8.8" viewBox="0 0 8 8.8" ><g transform='scale(1 1.1)'><path d='M-0.5 8.5 L-0.5 5.9 L5.2 1.0 L8.3 -0.7 L8.3 8.5 Z' fill='#1e1e1e' opacity='0.4'/><path d='M0 8 L0 6.5 L1.9 6.5 L1.9 8 Z' fill='#c8c8c8'/><path d='M2.7 8 L2.7 4.6 L4.7 3.2 L4.7 8 Z' fill='#d6d6d6'/><path d='M5.5 8 L5.5 1.8 L7.7 0 L7.7 8 Z' fill='#e8e8e8'/><path d='M0 6.4 L5.6 1.7' stroke='#c8c8c8' stroke-width='0.4'/></g></svg>
<svg x='355.10' y='285.25' width="10" height="7" viewBox="0 0 10 7" ><path d='M0.6 1.0 H3.6 C5.8 1.0 6.4 3.0 8.9 6.2' fill='none' stroke='#e4e4e4' stroke-width='1.4' stroke-linecap='round'/></svg>
<svg x='378.85' y='285.25' width="10" height="7" viewBox="0 0 10 7" ><path d='M0.7 6.2 C2.2 2.6 3.6 1.0 6 1.0 H9.2' fill='none' stroke='#e4e4e4' stroke-width='1.4' stroke-linecap='round'/></svg>
<rect x='314.25' y='268.90' width='119.25' height='13.20' fill='#ce6f6f' />
<rect x='315.25' y='269.90' width='117.25' height='11.20' fill='#c75858' />
<svg x='316.65' y='270.60' width="10" height="10" viewBox="0 0 10 10" ><g opacity='0.7'><ellipse cx='3.8' cy='5.7' rx='4.1' ry='2.0' transform='rotate(45 3.8 5.7)' fill='#1b1b1b' stroke='#1b1b1b' stroke-width='1.5'/><path d='M5.0 4.4 L8.3 1.3' stroke='#1b1b1b' stroke-width='2.8' stroke-linecap='round'/><path d='M3.7 3.6 L4.4 1.4' stroke='#1b1b1b' stroke-width='2.4' stroke-linecap='round'/><path d='M6.3 5.1 L8.5 4.7' stroke='#1b1b1b' stroke-width='2.4' stroke-linecap='round'/><path d='M2.4 7.4 L1.5 8.5' stroke='#1b1b1b' stroke-width='2.4' stroke-linecap='round'/></g><ellipse cx='3.8' cy='5.7' rx='4.1' ry='2.0' transform='rotate(45 3.8 5.7)' fill='#dcdcdc'/><path d='M5.0 4.4 L8.3 1.3' stroke='#dedede' stroke-width='1.4' stroke-linecap='round'/><path d='M3.7 3.6 L4.4 1.4' stroke='#dedede' stroke-width='1.3' stroke-linecap='round'/><path d='M6.3 5.1 L8.5 4.7' stroke='#dedede' stroke-width='1.3' stroke-linecap='round'/><path d='M2.4 7.4 L1.5 8.5' stroke='#dedede' stroke-width='1.3' stroke-linecap='round'/><ellipse cx='3.6' cy='5.7' rx='1.0' ry='0.6' transform='rotate(45 3.6 5.7)' fill='#4a4a4a'/></svg>
<rect x='314.25' y='316.50' width='119.25' height='14.40' fill='#626262' />
<rect x='315.25' y='317.50' width='117.25' height='12.40' fill='#383838' />
<rect x='352.00' y='317.00' width='1.00' height='13.90' fill='#626262' />
<rect x='375.75' y='317.00' width='1.00' height='13.90' fill='#626262' />
<svg x='317.85' y='319.15' width="8" height="8.8" viewBox="0 0 8 8.8" ><g transform='scale(1 1.1)'><path d='M-0.5 8.5 L-0.5 5.9 L5.2 1.0 L8.3 -0.7 L8.3 8.5 Z' fill='#1e1e1e' opacity='0.4'/><path d='M0 8 L0 6.5 L1.9 6.5 L1.9 8 Z' fill='#c8c8c8'/><path d='M2.7 8 L2.7 4.6 L4.7 3.2 L4.7 8 Z' fill='#d6d6d6'/><path d='M5.5 8 L5.5 1.8 L7.7 0 L7.7 8 Z' fill='#e8e8e8'/><path d='M0 6.4 L5.6 1.7' stroke='#c8c8c8' stroke-width='0.4'/></g></svg>
<svg x='355.10' y='320.25' width="10" height="7" viewBox="0 0 10 7" ><path d='M0.6 1.0 H3.6 C5.8 1.0 6.4 3.0 8.9 6.2' fill='none' stroke='#e4e4e4' stroke-width='1.4' stroke-linecap='round'/></svg>
<svg x='378.85' y='320.25' width="10" height="7" viewBox="0 0 10 7" ><path d='M0.7 6.2 C2.2 2.6 3.6 1.0 6 1.0 H9.2' fill='none' stroke='#e4e4e4' stroke-width='1.4' stroke-linecap='round'/></svg>
<rect x='314.25' y='303.50' width='119.25' height='13.50' fill='#4f4fcd' />
<rect x='315.25' y='304.50' width='117.25' height='11.50' fill='#3333c6' />
<svg x='316.65' y='305.35' width="10" height="10" viewBox="0 0 10 10" ><g opacity='0.7'><ellipse cx='3.8' cy='5.7' rx='4.1' ry='2.0' transform='rotate(45 3.8 5.7)' fill='#1b1b1b' stroke='#1b1b1b' stroke-width='1.5'/><path d='M5.0 4.4 L8.3 1.3' stroke='#1b1b1b' stroke-width='2.8' stroke-linecap='round'/><path d='M3.7 3.6 L4.4 1.4' stroke='#1b1b1b' stroke-width='2.4' stroke-linecap='round'/><path d='M6.3 5.1 L8.5 4.7' stroke='#1b1b1b' stroke-width='2.4' stroke-linecap='round'/><path d='M2.4 7.4 L1.5 8.5' stroke='#1b1b1b' stroke-width='2.4' stroke-linecap='round'/></g><ellipse cx='3.8' cy='5.7' rx='4.1' ry='2.0' transform='rotate(45 3.8 5.7)' fill='#dcdcdc'/><path d='M5.0 4.4 L8.3 1.3' stroke='#dedede' stroke-width='1.4' stroke-linecap='round'/><path d='M3.7 3.6 L4.4 1.4' stroke='#dedede' stroke-width='1.3' stroke-linecap='round'/><path d='M6.3 5.1 L8.5 4.7' stroke='#dedede' stroke-width='1.3' stroke-linecap='round'/><path d='M2.4 7.4 L1.5 8.5' stroke='#dedede' stroke-width='1.3' stroke-linecap='round'/><ellipse cx='3.6' cy='5.7' rx='1.0' ry='0.6' transform='rotate(45 3.6 5.7)' fill='#4a4a4a'/></svg>
<rect x='18.00' y='366.50' width='119.50' height='13.50' fill='#3a883a' />
<rect x='19.00' y='367.50' width='117.50' height='11.50' fill='#1b751b' />
<svg x='20.40' y='368.35' width="10" height="10" viewBox="0 0 10 10" ><rect x='3' y='0.6' width='4' height='9' fill='#1c1c1c'/><rect x='3.6' y='1.1' width='2.8' height='8' fill='#ededed'/><rect x='0.4' y='1.4' width='3.2' height='1.1' fill='#e0e0e0'/><rect x='6.6' y='3.2' width='2.4' height='5.8' fill='#1c1c1c'/><rect x='6.9' y='3.7' width='1.7' height='1' fill='#dcdcdc'/><rect x='6.9' y='5.6' width='1.7' height='1' fill='#dcdcdc'/><rect x='6.9' y='7.5' width='1.7' height='1' fill='#dcdcdc'/></svg>
<rect x='314.40' y='379.30' width='110.10' height='14.40' fill='#626262' />
<rect x='315.40' y='380.30' width='108.10' height='12.40' fill='#383838' />
<rect x='348.25' y='379.80' width='1.00' height='13.90' fill='#626262' />
<rect x='372.20' y='379.80' width='1.00' height='13.90' fill='#626262' />
<svg x='318.00' y='381.95' width="8" height="8.8" viewBox="0 0 8 8.8" ><g transform='scale(1 1.1)'><path d='M-0.5 8.5 L-0.5 5.9 L5.2 1.0 L8.3 -0.7 L8.3 8.5 Z' fill='#1e1e1e' opacity='0.4'/><path d='M0 8 L0 6.5 L1.9 6.5 L1.9 8 Z' fill='#c8c8c8'/><path d='M2.7 8 L2.7 4.6 L4.7 3.2 L4.7 8 Z' fill='#d6d6d6'/><path d='M5.5 8 L5.5 1.8 L7.7 0 L7.7 8 Z' fill='#e8e8e8'/><path d='M0 6.4 L5.6 1.7' stroke='#c8c8c8' stroke-width='0.4'/></g></svg>
<svg x='351.35' y='383.05' width="10" height="7" viewBox="0 0 10 7" ><path d='M0.6 1.0 H3.6 C5.8 1.0 6.4 3.0 8.9 6.2' fill='none' stroke='#e4e4e4' stroke-width='1.4' stroke-linecap='round'/></svg>
<svg x='375.30' y='383.05' width="10" height="7" viewBox="0 0 10 7" ><path d='M0.7 6.2 C2.2 2.6 3.6 1.0 6 1.0 H9.2' fill='none' stroke='#e4e4e4' stroke-width='1.4' stroke-linecap='round'/></svg>
<rect x='314.40' y='366.60' width='110.10' height='13.20' fill='#3a883a' />
<rect x='315.40' y='367.60' width='108.10' height='11.20' fill='#1b751b' />
<svg x='316.80' y='368.30' width="10" height="10" viewBox="0 0 10 10" ><g opacity='0.7'><ellipse cx='3.8' cy='5.7' rx='4.1' ry='2.0' transform='rotate(45 3.8 5.7)' fill='#1b1b1b' stroke='#1b1b1b' stroke-width='1.5'/><path d='M5.0 4.4 L8.3 1.3' stroke='#1b1b1b' stroke-width='2.8' stroke-linecap='round'/><path d='M3.7 3.6 L4.4 1.4' stroke='#1b1b1b' stroke-width='2.4' stroke-linecap='round'/><path d='M6.3 5.1 L8.5 4.7' stroke='#1b1b1b' stroke-width='2.4' stroke-linecap='round'/><path d='M2.4 7.4 L1.5 8.5' stroke='#1b1b1b' stroke-width='2.4' stroke-linecap='round'/></g><ellipse cx='3.8' cy='5.7' rx='4.1' ry='2.0' transform='rotate(45 3.8 5.7)' fill='#dcdcdc'/><path d='M5.0 4.4 L8.3 1.3' stroke='#dedede' stroke-width='1.4' stroke-linecap='round'/><path d='M3.7 3.6 L4.4 1.4' stroke='#dedede' stroke-width='1.3' stroke-linecap='round'/><path d='M6.3 5.1 L8.5 4.7' stroke='#dedede' stroke-width='1.3' stroke-linecap='round'/><path d='M2.4 7.4 L1.5 8.5' stroke='#dedede' stroke-width='1.3' stroke-linecap='round'/><ellipse cx='3.6' cy='5.7' rx='1.0' ry='0.6' transform='rotate(45 3.6 5.7)' fill='#4a4a4a'/></svg>
</g>
<rect x='0.00' y='394.30' width='1024.00' height='3.90' fill='#2e2e2e' />
<rect x='0.00' y='397.80' width='996.00' height='15.60' fill='#999999' />
<rect x='996.00' y='397.80' width='28.00' height='15.60' fill='#2b2b2b' />
<rect x='0.00' y='413.40' width='1024.00' height='1.00' fill='#383838' />
<g transform='translate(1006.3 405.8)'><rect x='-1.25' y='-4.50' width='2.5' height='2.8' rx='0.5' fill='#dadada' transform='rotate(0)'/><rect x='-1.25' y='-4.50' width='2.5' height='2.8' rx='0.5' fill='#dadada' transform='rotate(60)'/><rect x='-1.25' y='-4.50' width='2.5' height='2.8' rx='0.5' fill='#dadada' transform='rotate(120)'/><rect x='-1.25' y='-4.50' width='2.5' height='2.8' rx='0.5' fill='#dadada' transform='rotate(180)'/><rect x='-1.25' y='-4.50' width='2.5' height='2.8' rx='0.5' fill='#dadada' transform='rotate(240)'/><rect x='-1.25' y='-4.50' width='2.5' height='2.8' rx='0.5' fill='#dadada' transform='rotate(300)'/><circle r='3.20' fill='#dadada'/><circle r='1.3' fill='#2b2b2b'/></g>
<circle cx='1022' cy='405.8' r='4.4' fill='#d4d4d4'/>
<clipPath id='cc'><rect x='0' y='417.6' width='800.0' height='283.4'/></clipPath><g clip-path='url(#cc)'>
<rect x='0.00' y='417.60' width='800.00' height='254.20' fill='#2b2b2b' />
<rect x='0.00' y='417.60' width='800.00' height='5.80' fill='#333333' />
<rect x='0.00' y='477.00' width='800.00' height='5.45' fill='#333333' />
<rect x='0.00' y='482.45' width='800.00' height='5.05' fill='#393939' />
<rect x='0.00' y='541.00' width='800.00' height='5.70' fill='#333333' />
<rect x='0.00' y='546.70' width='800.00' height='5.30' fill='#393939' />
<rect x='0.00' y='605.80' width='800.00' height='5.80' fill='#333333' />
<rect x='0.00' y='611.60' width='800.00' height='5.40' fill='#393939' />
<rect x='0.00' y='428.85' width='800.00' height='0.90' fill='#3c3c3c' />
<rect x='0.00' y='436.15' width='800.00' height='0.90' fill='#474747' />
<rect x='0.00' y='443.05' width='800.00' height='0.90' fill='#3c3c3c' />
<rect x='0.00' y='449.85' width='800.00' height='0.90' fill='#474747' />
<rect x='0.00' y='456.35' width='800.00' height='0.90' fill='#3c3c3c' />
<rect x='0.00' y='463.05' width='800.00' height='0.90' fill='#474747' />
<rect x='0.00' y='469.75' width='800.00' height='0.90' fill='#3c3c3c' />
<rect x='0.00' y='497.55' width='800.00' height='0.90' fill='#474747' />
<rect x='0.00' y='508.75' width='800.00' height='0.90' fill='#3a3a3a' />
<rect x='0.00' y='519.35' width='800.00' height='0.90' fill='#474747' />
<rect x='0.00' y='529.95' width='800.00' height='0.90' fill='#333333' />
<rect x='0.00' y='562.55' width='800.00' height='0.90' fill='#474747' />
<rect x='0.00' y='573.15' width='800.00' height='0.90' fill='#3a3a3a' />
<rect x='0.00' y='583.75' width='800.00' height='0.90' fill='#474747' />
<rect x='0.00' y='594.75' width='800.00' height='0.90' fill='#333333' />
<rect x='0.00' y='623.55' width='800.00' height='0.90' fill='#3c3c3c' />
<rect x='0.00' y='630.15' width='800.00' height='0.90' fill='#474747' />
<rect x='0.00' y='636.95' width='800.00' height='0.90' fill='#3c3c3c' />
<rect x='0.00' y='643.75' width='800.00' height='0.90' fill='#474747' />
<rect x='0.00' y='650.55' width='800.00' height='0.90' fill='#3c3c3c' />
<rect x='0.00' y='657.35' width='800.00' height='0.90' fill='#474747' />
<rect x='0.00' y='664.15' width='800.00' height='0.90' fill='#3c3c3c' />
<path d='M-1.0 473.5 L5.5 473.5 L5.5 473.5 L10.5 473.5 L10.5 473.8 L17.0 473.8 L17.0 472.6 L20.0 472.6 L20.0 473.8 L25.0 473.8 L25.0 472.3 L27.0 472.3 L27.0 473.5 L31.0 473.5 L31.0 472.3 L33.0 472.3 L33.0 473.8 L35.0 473.8 L35.0 473.2 L40.0 473.2 L40.0 472.3 L46.5 472.3 L46.5 471.7 L53.0 471.7 L53.0 472.0 L55.0 472.0 L55.0 471.7 L58.0 471.7 L58.0 472.6 L64.5 472.6 L64.5 471.7 L69.5 471.7 L69.5 472.9 L74.5 472.9 L74.5 472.6 L81.0 472.6 L81.0 472.6 L85.0 472.6 L85.0 473.5 L87.0 473.5 L87.0 472.0 L92.0 472.0 L92.0 472.6 L97.0 472.6 L97.0 473.8 L99.0 473.8 L99.0 472.6 L103.0 472.6 L103.0 472.6 L109.5 472.6 L109.5 472.6 L111.5 472.6 L111.5 472.0 L118.0 472.0 L118.0 472.0 L123.0 472.0 L123.0 472.0 L127.0 472.0 L127.0 473.2 L129.0 473.2 L129.0 471.7 L131.0 471.7 L131.0 472.6 L134.0 472.6 L134.0 471.7 L139.0 471.7 L139.0 473.2 L144.0 473.2 L144.0 473.2 L146.0 473.2 L146.0 472.6 L150.0 472.6 L150.0 472.9 L152.0 472.9 L152.0 472.6 L156.0 472.6 L156.0 471.7 L161.0 471.7 L161.0 472.0 L164.0 472.0 L164.0 472.6 L166.0 472.6 L166.0 471.7 L168.0 471.7 L168.0 473.5 L173.0 473.5 L173.0 472.3 L179.5 472.3 L179.5 472.6 L184.5 472.6 L184.5 473.8 L187.5 473.8 L187.5 472.3 L192.5 472.3 L192.5 473.2 L194.5 473.2 L194.5 473.2 L199.5 473.2 L199.5 472.6 L201.5 472.6 L201.5 472.6 L208.0 472.6 L208.0 472.6 L210.0 472.6 L210.0 472.6 L213.0 472.6 L213.0 473.2 L219.5 473.2 L219.5 472.0 L221.5 472.0 L221.5 472.3 L224.5 472.3 L224.5 473.5 L228.5 473.5 L228.5 471.7 L235.0 471.7 L235.0 472.9 L239.0 472.9 L239.0 473.2 L241.0 473.2 L241.0 472.0 L243.0 472.0 L243.0 472.6 L249.5 472.6 L249.5 472.6 L251.5 472.6 L251.5 472.9 L255.5 472.9 L255.5 473.5 L258.5 473.5 L258.5 473.5 L265.0 473.5 L265.0 472.3 L270.0 472.3 L270.0 472.3 L273.0 472.3 L273.0 472.6 L276.0 472.6 L276.0 472.6 L279.0 472.6 L279.0 472.3 L285.5 472.3 L285.5 472.6 L290.5 472.6 L290.5 473.5 L297.0 473.5 L297.0 472.0 L302.0 472.0 L302.0 471.7 L304.0 471.7 L304.0 472.0 L306.0 472.0 L306.0 473.8 L310.0 473.8 L310.0 472.6 L315.0 472.6 L315.0 472.6 L320.0 472.6 L320.0 473.5 L324.0 473.5 L324.0 473.8 L327.0 473.8 L327.0 472.0 L330.0 472.0 L330.0 472.6 L335.0 472.6 L335.0 473.8 L341.5 473.8 L341.5 472.0 L345.5 472.0 L345.5 472.6 L348.5 472.6 L348.5 471.7 L350.5 471.7 L350.5 472.6 L355.5 472.6 L355.5 473.5 L358.5 473.5 L358.5 471.7 L360.5 471.7 L360.5 472.3 L364.5 472.3 L364.5 472.9 L371.0 472.9 L371.0 472.3 L373.0 472.3 L373.0 472.9 L376.0 472.9 L376.0 473.5 L380.0 473.5 L380.0 473.8 L386.5 473.8 L386.5 472.3 L393.0 472.3 L393.0 471.7 L395.0 471.7 L395.0 473.5 L399.0 473.5 L399.0 472.6 L401.0 472.6 L401.0 471.7 L407.5 471.7 L407.5 472.0 L412.5 472.0 L412.5 472.0 L416.5 472.0 L416.5 472.9 L419.5 472.9 L419.5 472.0 L421.5 472.0 L421.5 473.5 L428.0 473.5 L428.0 472.9 L430.0 472.9 L430.0 472.3 L434.0 472.3 L434.0 472.9 L436.0 472.9 L436.0 473.5 L438.0 473.5 L438.0 473.2 L440.0 473.2 L440.0 473.5 L446.5 473.5 L446.5 471.7 L453.0 471.7 L453.0 473.2 L458.0 473.2 L458.0 471.7 L464.5 471.7 L464.5 472.0 L466.5 472.0 L466.5 472.0 L468.5 472.0 L468.5 472.6 L473.5 472.6 L473.5 472.9 L478.5 472.9 L478.5 473.5 L483.5 473.5 L483.5 473.5 L490.0 473.5 L490.0 472.0 L496.5 472.0 L496.5 473.8 L498.5 473.8 L498.5 472.6 L505.0 472.6 L505.0 472.0 L510.0 472.0 L510.0 471.7 L513.0 471.7 L513.0 472.0 L518.0 472.0 L518.0 473.5 L522.0 473.5 L522.0 471.7 L526.0 471.7 L526.0 472.6 L529.0 472.6 L529.0 472.6 L535.5 472.6 L535.5 472.3 L539.5 472.3 L539.5 473.5 L544.5 473.5 L544.5 472.6 L548.5 472.6 L548.5 473.2 L552.5 473.2 L552.5 472.6 L557.5 472.6 L557.5 472.6 L560.5 472.6 L560.5 473.2 L563.5 473.2 L563.5 472.9 L566.5 472.9 L566.5 472.3 L569.5 472.3 L569.5 473.5 L573.5 473.5 L573.5 471.7 L575.5 471.7 L575.5 472.6 L578.5 472.6 L578.5 472.0 L583.5 472.0 L583.5 473.5 L587.5 473.5 L587.5 472.6 L592.5 472.6 L592.5 473.2 L599.0 473.2 L599.0 473.5 L603.0 473.5 L603.0 473.5 L607.0 473.5 L607.0 472.0 L609.0 472.0 L609.0 472.6 L615.5 472.6 L615.5 471.7 L619.5 471.7 L619.5 472.9 L623.5 472.9 L623.5 471.7 L626.5 471.7 L626.5 473.2 L631.5 473.2 L631.5 472.6 L633.5 472.6 L633.5 472.6 L636.5 472.6 L636.5 472.3 L638.5 472.3 L638.5 472.0 L643.5 472.0 L643.5 472.0 L650.0 472.0 L650.0 472.9 L652.0 472.9 L652.0 472.6 L655.0 472.6 L655.0 473.5 L659.0 473.5 L659.0 472.3 L661.0 472.3 L661.0 473.5 L667.5 473.5 L667.5 471.7 L670.5 471.7 L670.5 472.6 L674.5 472.6 L674.5 472.9 L681.0 472.9 L681.0 473.8 L687.5 473.8 L687.5 472.3 L692.5 472.3 L692.5 472.6 L694.5 472.6 L694.5 473.2 L699.5 473.2 L699.5 472.3 L704.5 472.3 L704.5 473.5 L707.5 473.5 L707.5 471.7 L712.5 471.7 L712.5 473.8 L719.0 473.8 L719.0 473.8 L723.0 473.8 L723.0 473.5 L727.0 473.5 L727.0 472.6 L729.0 472.6 L729.0 472.0 L732.0 472.0 L732.0 472.6 L737.0 472.6 L737.0 472.0 L741.0 472.0 L741.0 473.8 L745.0 473.8 L745.0 472.6 L747.0 472.6 L747.0 472.9 L753.5 472.9 L753.5 472.0 L755.5 472.0 L755.5 473.5 L759.5 473.5 L759.5 473.8 L764.5 473.8 L764.5 472.6 L769.5 472.6 L769.5 471.7 L772.5 471.7 L772.5 472.0 L777.5 472.0 L777.5 471.7 L780.5 471.7 L780.5 473.8 L784.5 473.8 L784.5 472.3 L789.5 472.3 L789.5 472.3 L796.0 472.3 L796.0 473.8 L801.0 473.8 L801.0 473.5 L807.5 473.5' fill='none' stroke='#3d52d0' stroke-width='1.2' />
<path d='M3.0 472.6 V470.0 H6.0 V472.6' fill='none' stroke='#3b50c8' stroke-width='0.7' opacity='0.8'/>
<path d='M10.0 472.6 V474.8 H12.4 V472.6' fill='none' stroke='#3b50c8' stroke-width='0.7' opacity='0.8'/>
<path d='M26.0 472.6 V474.0 H28.4 V472.6' fill='none' stroke='#3b50c8' stroke-width='0.7' opacity='0.8'/>
<path d='M48.0 472.6 V471.0 H51.0 V472.6' fill='none' stroke='#3b50c8' stroke-width='0.7' opacity='0.8'/>
<path d='M55.0 472.6 V474.8 H58.0 V472.6' fill='none' stroke='#3b50c8' stroke-width='0.7' opacity='0.8'/>
<path d='M71.0 472.6 V470.6 H73.4 V472.6' fill='none' stroke='#3b50c8' stroke-width='0.7' opacity='0.8'/>
<path d='M93.0 472.6 V474.0 H95.4 V472.6' fill='none' stroke='#3b50c8' stroke-width='0.7' opacity='0.8'/>
<path d='M109.0 472.6 V470.6 H110.8 V472.6' fill='none' stroke='#3b50c8' stroke-width='0.7' opacity='0.8'/>
<path d='M116.0 472.6 V474.8 H119.0 V472.6' fill='none' stroke='#3b50c8' stroke-width='0.7' opacity='0.8'/>
<path d='M125.0 472.6 V474.4 H128.0 V472.6' fill='none' stroke='#3b50c8' stroke-width='0.7' opacity='0.8'/>
<path d='M132.0 472.6 V474.8 H134.4 V472.6' fill='none' stroke='#3b50c8' stroke-width='0.7' opacity='0.8'/>
<path d='M137.0 472.6 V470.0 H140.0 V472.6' fill='none' stroke='#3b50c8' stroke-width='0.7' opacity='0.8'/>
<path d='M153.0 472.6 V470.0 H155.4 V472.6' fill='none' stroke='#3b50c8' stroke-width='0.7' opacity='0.8'/>
<path d='M169.0 472.6 V474.8 H170.8 V472.6' fill='none' stroke='#3b50c8' stroke-width='0.7' opacity='0.8'/>
<path d='M181.0 472.6 V474.0 H184.0 V472.6' fill='none' stroke='#3b50c8' stroke-width='0.7' opacity='0.8'/>
<path d='M197.0 472.6 V474.4 H198.8 V472.6' fill='none' stroke='#3b50c8' stroke-width='0.7' opacity='0.8'/>
<path d='M202.0 472.6 V469.2 H205.0 V472.6' fill='none' stroke='#3b50c8' stroke-width='0.7' opacity='0.8'/>
<path d='M207.0 472.6 V474.4 H210.0 V472.6' fill='none' stroke='#3b50c8' stroke-width='0.7' opacity='0.8'/>
<path d='M219.0 472.6 V470.6 H221.4 V472.6' fill='none' stroke='#3b50c8' stroke-width='0.7' opacity='0.8'/>
<path d='M226.0 472.6 V474.4 H228.4 V472.6' fill='none' stroke='#3b50c8' stroke-width='0.7' opacity='0.8'/>
<path d='M233.0 472.6 V474.4 H235.4 V472.6' fill='none' stroke='#3b50c8' stroke-width='0.7' opacity='0.8'/>
<path d='M245.0 472.6 V470.6 H248.0 V472.6' fill='none' stroke='#3b50c8' stroke-width='0.7' opacity='0.8'/>
<path d='M250.0 472.6 V474.4 H251.8 V472.6' fill='none' stroke='#3b50c8' stroke-width='0.7' opacity='0.8'/>
<path d='M266.0 472.6 V470.6 H267.8 V472.6' fill='none' stroke='#3b50c8' stroke-width='0.7' opacity='0.8'/>
<path d='M273.0 472.6 V474.0 H276.0 V472.6' fill='none' stroke='#3b50c8' stroke-width='0.7' opacity='0.8'/>
<path d='M278.0 472.6 V469.2 H279.8 V472.6' fill='none' stroke='#3b50c8' stroke-width='0.7' opacity='0.8'/>
<path d='M285.0 472.6 V470.0 H286.8 V472.6' fill='none' stroke='#3b50c8' stroke-width='0.7' opacity='0.8'/>
<path d='M307.0 472.6 V470.6 H309.4 V472.6' fill='none' stroke='#3b50c8' stroke-width='0.7' opacity='0.8'/>
<path d='M329.0 472.6 V469.2 H331.4 V472.6' fill='none' stroke='#3b50c8' stroke-width='0.7' opacity='0.8'/>
<path d='M345.0 472.6 V470.0 H347.4 V472.6' fill='none' stroke='#3b50c8' stroke-width='0.7' opacity='0.8'/>
<path d='M357.0 472.6 V474.8 H360.0 V472.6' fill='none' stroke='#3b50c8' stroke-width='0.7' opacity='0.8'/>
<path d='M362.0 472.6 V474.8 H365.0 V472.6' fill='none' stroke='#3b50c8' stroke-width='0.7' opacity='0.8'/>
<path d='M371.0 472.6 V469.2 H374.0 V472.6' fill='none' stroke='#3b50c8' stroke-width='0.7' opacity='0.8'/>
<path d='M393.0 472.6 V474.4 H396.0 V472.6' fill='none' stroke='#3b50c8' stroke-width='0.7' opacity='0.8'/>
<path d='M398.0 472.6 V471.0 H400.4 V472.6' fill='none' stroke='#3b50c8' stroke-width='0.7' opacity='0.8'/>
<path d='M410.0 472.6 V474.8 H413.0 V472.6' fill='none' stroke='#3b50c8' stroke-width='0.7' opacity='0.8'/>
<path d='M417.0 472.6 V469.2 H420.0 V472.6' fill='none' stroke='#3b50c8' stroke-width='0.7' opacity='0.8'/>
<path d='M439.0 472.6 V471.0 H442.0 V472.6' fill='none' stroke='#3b50c8' stroke-width='0.7' opacity='0.8'/>
<path d='M446.0 472.6 V469.2 H449.0 V472.6' fill='none' stroke='#3b50c8' stroke-width='0.7' opacity='0.8'/>
<path d='M462.0 472.6 V474.8 H465.0 V472.6' fill='none' stroke='#3b50c8' stroke-width='0.7' opacity='0.8'/>
<path d='M469.0 472.6 V471.0 H470.8 V472.6' fill='none' stroke='#3b50c8' stroke-width='0.7' opacity='0.8'/>
<path d='M491.0 472.6 V469.2 H493.4 V472.6' fill='none' stroke='#3b50c8' stroke-width='0.7' opacity='0.8'/>
<path d='M500.0 472.6 V470.6 H503.0 V472.6' fill='none' stroke='#3b50c8' stroke-width='0.7' opacity='0.8'/>
<path d='M507.0 472.6 V474.0 H508.8 V472.6' fill='none' stroke='#3b50c8' stroke-width='0.7' opacity='0.8'/>
<path d='M514.0 472.6 V469.2 H515.8 V472.6' fill='none' stroke='#3b50c8' stroke-width='0.7' opacity='0.8'/>
<path d='M521.0 472.6 V471.0 H522.8 V472.6' fill='none' stroke='#3b50c8' stroke-width='0.7' opacity='0.8'/>
<path d='M526.0 472.6 V474.4 H528.4 V472.6' fill='none' stroke='#3b50c8' stroke-width='0.7' opacity='0.8'/>
<path d='M531.0 472.6 V474.0 H533.4 V472.6' fill='none' stroke='#3b50c8' stroke-width='0.7' opacity='0.8'/>
<path d='M543.0 472.6 V474.0 H546.0 V472.6' fill='none' stroke='#3b50c8' stroke-width='0.7' opacity='0.8'/>
<path d='M565.0 472.6 V469.2 H566.8 V472.6' fill='none' stroke='#3b50c8' stroke-width='0.7' opacity='0.8'/>
<path d='M577.0 472.6 V471.0 H580.0 V472.6' fill='none' stroke='#3b50c8' stroke-width='0.7' opacity='0.8'/>
<path d='M582.0 472.6 V469.2 H583.8 V472.6' fill='none' stroke='#3b50c8' stroke-width='0.7' opacity='0.8'/>
<path d='M598.0 472.6 V470.6 H601.0 V472.6' fill='none' stroke='#3b50c8' stroke-width='0.7' opacity='0.8'/>
<path d='M607.0 472.6 V471.0 H608.8 V472.6' fill='none' stroke='#3b50c8' stroke-width='0.7' opacity='0.8'/>
<path d='M623.0 472.6 V474.0 H626.0 V472.6' fill='none' stroke='#3b50c8' stroke-width='0.7' opacity='0.8'/>
<path d='M632.0 472.6 V471.0 H635.0 V472.6' fill='none' stroke='#3b50c8' stroke-width='0.7' opacity='0.8'/>
<path d='M639.0 472.6 V474.4 H640.8 V472.6' fill='none' stroke='#3b50c8' stroke-width='0.7' opacity='0.8'/>
<path d='M644.0 472.6 V470.0 H645.8 V472.6' fill='none' stroke='#3b50c8' stroke-width='0.7' opacity='0.8'/>
<path d='M660.0 472.6 V474.8 H663.0 V472.6' fill='none' stroke='#3b50c8' stroke-width='0.7' opacity='0.8'/>
<path d='M676.0 472.6 V469.2 H678.4 V472.6' fill='none' stroke='#3b50c8' stroke-width='0.7' opacity='0.8'/>
<path d='M683.0 472.6 V470.0 H684.8 V472.6' fill='none' stroke='#3b50c8' stroke-width='0.7' opacity='0.8'/>
<path d='M690.0 472.6 V474.0 H691.8 V472.6' fill='none' stroke='#3b50c8' stroke-width='0.7' opacity='0.8'/>
<path d='M697.0 472.6 V471.0 H699.4 V472.6' fill='none' stroke='#3b50c8' stroke-width='0.7' opacity='0.8'/>
<path d='M702.0 472.6 V470.0 H705.0 V472.6' fill='none' stroke='#3b50c8' stroke-width='0.7' opacity='0.8'/>
<path d='M709.0 472.6 V474.4 H712.0 V472.6' fill='none' stroke='#3b50c8' stroke-width='0.7' opacity='0.8'/>
<path d='M714.0 472.6 V470.6 H715.8 V472.6' fill='none' stroke='#3b50c8' stroke-width='0.7' opacity='0.8'/>
<path d='M726.0 472.6 V474.4 H728.4 V472.6' fill='none' stroke='#3b50c8' stroke-width='0.7' opacity='0.8'/>
<path d='M742.0 472.6 V474.4 H744.4 V472.6' fill='none' stroke='#3b50c8' stroke-width='0.7' opacity='0.8'/>
<path d='M749.0 472.6 V470.6 H752.0 V472.6' fill='none' stroke='#3b50c8' stroke-width='0.7' opacity='0.8'/>
<path d='M754.0 472.6 V471.0 H757.0 V472.6' fill='none' stroke='#3b50c8' stroke-width='0.7' opacity='0.8'/>
<path d='M759.0 472.6 V469.2 H760.8 V472.6' fill='none' stroke='#3b50c8' stroke-width='0.7' opacity='0.8'/>
<path d='M771.0 472.6 V470.6 H773.4 V472.6' fill='none' stroke='#3b50c8' stroke-width='0.7' opacity='0.8'/>
<path d='M793.0 472.6 V474.4 H795.4 V472.6' fill='none' stroke='#3b50c8' stroke-width='0.7' opacity='0.8'/>
<path d='M0.0 533.6 L6.0 533.6 L6.0 532.8 L11.0 532.8 L11.0 532.2 L47.0 532.2 L47.0 533.0 L55.0 533.0 L55.0 532.2 L65.0 532.2 L65.0 533.0 L70.0 533.0 L70.0 533.6 L100.0 533.6 L100.0 532.6 L106.0 532.6 L106.0 531.8 L118.0 531.8 L118.0 532.4 L121.0 532.4 L121.0 531.6 L136.0 531.6 L136.0 531.0 L152.0 531.0 L152.0 530.2 L158.0 530.2 L158.0 529.4 L178.0 529.4 L178.0 530.0 L183.0 530.0 L183.0 529.2 L192.0 529.2 L192.0 528.4 L200.0 528.4 L200.0 527.6 L232.0 527.6 L232.0 527.0 L236.0 527.0 L236.0 527.6 L270.0 527.6 L270.0 528.4 L278.0 528.4 L278.0 528.9 L318.0 528.9 L318.0 528.4 L355.0 528.4 L355.0 529.0 L362.0 529.0 L362.0 529.6 L380.0 529.6 L380.0 529.0 L398.0 529.0 L398.0 529.6 L407.0 529.6 L407.0 528.6 L416.0 528.6 L416.0 529.4 L422.0 529.4 L422.0 530.4 L430.0 530.4 L430.0 531.4 L437.0 531.4 L437.0 532.6 L444.0 532.6 L444.0 533.6 L454.0 533.6 L454.0 534.6 L464.0 534.6 L464.0 535.4 L486.0 535.4 L486.0 534.8 L500.0 534.8 L500.0 534.8 L526.0 534.8 L526.0 535.8 L533.0 535.8 L533.0 536.6 L571.0 536.6 L571.0 536.0 L577.0 536.0 L577.0 535.2 L590.0 535.2 L590.0 534.6 L615.0 534.6 L615.0 534.0 L629.0 534.0 L629.0 534.4 L634.0 534.4 L634.0 533.0 L640.0 533.0 L640.0 532.2 L648.0 532.2 L648.0 533.4 L656.0 533.4 L656.0 532.6 L661.0 532.6 L661.0 531.6 L668.0 531.6 L668.0 532.4 L690.0 532.4 L690.0 531.6 L695.0 531.6 L695.0 532.0 L722.0 532.0 L722.0 532.6 L756.0 532.6 L756.0 533.0 L810.0 533.0 L810.0 533.0' fill='none' stroke='#d07c36' stroke-width='1.0' />
<path d='M0.0 603.0 L76.0 603.0 L76.0 603.8 L100.0 603.8 L100.0 603.0 L150.0 603.0 L150.0 602.6 L197.0 602.6 L197.0 602.0 L230.0 602.0 L230.0 602.3 L233.0 602.3 L233.0 602.0 L247.0 602.0 L247.0 602.7 L425.0 602.7 L425.0 603.3 L445.0 603.3 L445.0 603.9 L527.0 603.9 L527.0 604.5 L573.0 604.5 L573.0 603.7 L620.0 603.7 L620.0 603.0 L627.0 603.0 L627.0 603.6 L633.0 603.6 L633.0 602.9 L810.0 602.9 L810.0 602.9' fill='none' stroke='#2aa02a' stroke-width='1.1' />
<path d='M0.0 670.3 L7.0 670.3 L7.0 669.0 L9.0 669.0 L9.0 668.2 L11.0 668.2 L11.0 670.3 L13.0 670.3 L13.0 669.0 L17.0 669.0 L17.0 670.3 L23.0 670.3 L23.0 669.2 L27.0 669.2 L27.0 670.3 L36.0 670.3 L36.0 669.2 L38.0 669.2 L38.0 670.3 L53.0 670.3 L53.0 667.6 L57.0 667.6 L57.0 669.0 L60.0 669.0 L60.0 670.3 L74.0 670.3 L74.0 669.0 L78.0 669.0 L78.0 670.3 L83.0 670.3 L83.0 669.2 L88.0 669.2 L88.0 670.3 L94.0 670.3 L94.0 669.2 L97.0 669.2 L97.0 670.3 L100.0 670.3 L100.0 663.4 L102.0 663.4 L102.0 660.6 L105.0 660.6 L105.0 657.6 L108.0 657.6 L108.0 654.8 L113.0 654.8 L113.0 657.0 L115.0 657.0 L115.0 661.2 L116.0 661.2 L116.0 664.8 L119.0 664.8 L119.0 661.0 L121.0 661.0 L121.0 659.6 L128.0 659.6 L128.0 661.4 L131.0 661.4 L131.0 663.6 L133.0 663.6 L133.0 665.6 L137.0 665.6 L137.0 664.0 L139.0 664.0 L139.0 662.0 L143.0 662.0 L143.0 661.0 L146.0 661.0 L146.0 662.4 L150.0 662.4 L150.0 664.2 L153.0 664.2 L153.0 665.4 L156.0 665.4 L156.0 659.6 L158.0 659.6 L158.0 653.2 L161.0 653.2 L161.0 655.0 L163.0 655.0 L163.0 653.6 L168.0 653.6 L168.0 659.0 L170.0 659.0 L170.0 661.4 L172.0 661.4 L172.0 664.6 L175.0 664.6 L175.0 663.0 L177.0 663.0 L177.0 659.6 L179.0 659.6 L179.0 654.0 L181.0 654.0 L181.0 656.6 L183.0 656.6 L183.0 658.0 L186.0 658.0 L186.0 660.4 L188.0 660.4 L188.0 662.6 L190.0 662.6 L190.0 666.0 L192.0 666.0 L192.0 664.0 L193.0 664.0 L193.0 659.6 L197.0 659.6 L197.0 656.8 L198.0 656.8 L198.0 653.4 L202.0 653.4 L202.0 655.4 L204.0 655.4 L204.0 657.6 L208.0 657.6 L208.0 659.0 L210.0 659.0 L210.0 663.6 L214.0 663.6 L214.0 664.6 L217.0 664.6 L217.0 662.6 L220.0 662.6 L220.0 663.6 L223.0 663.6 L223.0 665.4 L226.0 665.4 L226.0 664.4 L229.0 664.4 L229.0 666.4 L232.0 666.4 L232.0 664.6 L235.0 664.6 L235.0 666.0 L238.0 666.0 L238.0 665.0 L241.0 665.0 L241.0 666.6 L245.0 666.6 L245.0 667.6 L248.0 667.6 L248.0 668.6 L252.0 668.6 L252.0 669.2 L262.0 669.2 L262.0 670.3 L266.0 670.3 L266.0 668.8 L270.0 668.8 L270.0 670.3 L300.0 670.3 L300.0 670.3 L313.0 670.3 L313.0 667.0 L316.0 667.0 L316.0 669.2 L320.0 669.2 L320.0 668.8 L330.0 668.8 L330.0 670.3 L352.0 670.3 L352.0 669.2 L360.0 669.2 L360.0 670.3 L370.0 670.3 L370.0 668.4 L374.0 668.4 L374.0 669.2 L380.0 669.2 L380.0 670.3 L410.0 670.3 L410.0 667.4 L414.0 667.4 L414.0 670.3 L430.0 670.3 L430.0 668.6 L433.0 668.6 L433.0 667.0 L437.0 667.0 L437.0 669.0 L440.0 669.0 L440.0 670.3 L470.0 670.3 L470.0 669.2 L480.0 669.2 L480.0 670.3 L490.0 670.3 L490.0 668.6 L493.0 668.6 L493.0 666.6 L496.0 666.6 L496.0 670.3 L508.0 670.3 L508.0 665.8 L512.0 665.8 L512.0 667.6 L514.0 667.6 L514.0 665.8 L518.0 665.8 L518.0 668.4 L521.0 668.4 L521.0 670.3 L530.0 670.3 L530.0 669.0 L534.0 669.0 L534.0 670.3 L548.0 670.3 L548.0 669.0 L552.0 669.0 L552.0 670.3 L572.0 670.3 L572.0 667.6 L578.0 667.6 L578.0 669.4 L584.0 669.4 L584.0 667.4 L590.0 667.4 L590.0 663.8 L600.0 663.8 L600.0 664.8 L604.0 664.8 L604.0 666.2 L607.0 666.2 L607.0 668.0 L613.0 668.0 L613.0 667.0 L617.0 667.0 L617.0 662.0 L619.0 662.0 L619.0 659.2 L623.0 659.2 L623.0 658.0 L626.0 658.0 L626.0 659.4 L629.0 659.4 L629.0 661.6 L633.0 661.6 L633.0 660.6 L636.0 660.6 L636.0 659.6 L641.0 659.6 L641.0 658.6 L643.0 658.6 L643.0 656.4 L645.0 656.4 L645.0 659.4 L650.0 659.4 L650.0 661.0 L654.0 661.0 L654.0 662.6 L658.0 662.6 L658.0 664.6 L662.0 664.6 L662.0 663.4 L666.0 663.4 L666.0 665.2 L670.0 665.2 L670.0 667.0 L676.0 667.0 L676.0 666.0 L680.0 666.0 L680.0 667.6 L688.0 667.6 L688.0 662.4 L693.0 662.4 L693.0 661.6 L697.0 661.6 L697.0 662.8 L701.0 662.8 L701.0 662.0 L704.0 662.0 L704.0 664.4 L707.0 664.4 L707.0 666.6 L712.0 666.6 L712.0 668.6 L720.0 668.6 L720.0 670.3 L740.0 670.3 L740.0 669.2 L745.0 669.2 L745.0 670.3 L760.0 670.3 L760.0 669.0 L763.0 669.0 L763.0 670.3 L784.0 670.3 L784.0 669.0 L788.0 669.0 L788.0 670.3 L810.0 670.3 L810.0 670.3' fill='none' stroke='#c47838' stroke-width='0.85' />
<rect x='0.00' y='671.80' width='800.00' height='20.00' fill='#333333' />
<rect x='7.75' y='676.60' width='0.90' height='4.00' fill='#7c7c7c' />
<rect x='16.11' y='676.60' width='0.90' height='4.00' fill='#8e8e8e' />
<rect x='24.46' y='676.60' width='0.90' height='4.00' fill='#7c7c7c' />
<rect x='32.82' y='676.60' width='0.90' height='4.00' fill='#7c7c7c' />
<rect x='41.18' y='676.60' width='0.90' height='4.00' fill='#7c7c7c' />
<rect x='49.53' y='676.60' width='0.90' height='4.00' fill='#7c7c7c' />
<rect x='57.89' y='676.60' width='0.90' height='4.00' fill='#8e8e8e' />
<rect x='66.25' y='676.60' width='0.90' height='4.00' fill='#7c7c7c' />
<rect x='74.61' y='676.60' width='0.90' height='4.00' fill='#7c7c7c' />
<rect x='82.96' y='676.60' width='0.90' height='4.00' fill='#7c7c7c' />
<rect x='91.32' y='676.60' width='0.90' height='4.00' fill='#7c7c7c' />
<rect x='99.68' y='676.60' width='0.90' height='4.00' fill='#8e8e8e' />
<rect x='108.03' y='676.60' width='0.90' height='4.00' fill='#7c7c7c' />
<rect x='116.39' y='676.60' width='0.90' height='4.00' fill='#7c7c7c' />
<rect x='124.75' y='676.60' width='0.90' height='4.00' fill='#7c7c7c' />
<rect x='133.11' y='676.60' width='0.90' height='4.00' fill='#7c7c7c' />
<rect x='141.46' y='676.60' width='0.90' height='4.00' fill='#8e8e8e' />
<rect x='149.82' y='676.60' width='0.90' height='4.00' fill='#7c7c7c' />
<rect x='158.18' y='676.60' width='0.90' height='4.00' fill='#7c7c7c' />
<rect x='166.53' y='676.60' width='0.90' height='4.00' fill='#7c7c7c' />
<rect x='174.89' y='676.60' width='0.90' height='4.00' fill='#7c7c7c' />
<rect x='183.25' y='676.60' width='0.90' height='4.00' fill='#8e8e8e' />
<rect x='191.60' y='676.60' width='0.90' height='4.00' fill='#7c7c7c' />
<rect x='199.96' y='676.60' width='0.90' height='4.00' fill='#7c7c7c' />
<rect x='208.32' y='676.60' width='0.90' height='4.00' fill='#7c7c7c' />
<rect x='216.68' y='676.60' width='0.90' height='4.00' fill='#7c7c7c' />
<rect x='225.03' y='676.60' width='0.90' height='4.00' fill='#8e8e8e' />
<rect x='233.39' y='676.60' width='0.90' height='4.00' fill='#7c7c7c' />
<rect x='241.75' y='676.60' width='0.90' height='4.00' fill='#7c7c7c' />
<rect x='250.10' y='676.60' width='0.90' height='4.00' fill='#7c7c7c' />
<rect x='258.46' y='676.60' width='0.90' height='4.00' fill='#7c7c7c' />
<rect x='266.82' y='676.60' width='0.90' height='4.00' fill='#8e8e8e' />
<rect x='275.17' y='676.60' width='0.90' height='4.00' fill='#7c7c7c' />
<rect x='283.53' y='676.60' width='0.90' height='4.00' fill='#7c7c7c' />
<rect x='291.89' y='676.60' width='0.90' height='4.00' fill='#7c7c7c' />
<rect x='300.24' y='676.60' width='0.90' height='4.00' fill='#7c7c7c' />
<rect x='308.60' y='676.60' width='0.90' height='4.00' fill='#8e8e8e' />
<rect x='316.96' y='676.60' width='0.90' height='4.00' fill='#7c7c7c' />
<rect x='325.32' y='676.60' width='0.90' height='4.00' fill='#7c7c7c' />
<rect x='333.67' y='676.60' width='0.90' height='4.00' fill='#7c7c7c' />
<rect x='342.03' y='676.60' width='0.90' height='4.00' fill='#7c7c7c' />
<rect x='350.39' y='676.60' width='0.90' height='4.00' fill='#8e8e8e' />
<rect x='358.74' y='676.60' width='0.90' height='4.00' fill='#7c7c7c' />
<rect x='367.10' y='676.60' width='0.90' height='4.00' fill='#7c7c7c' />
<rect x='375.46' y='676.60' width='0.90' height='4.00' fill='#7c7c7c' />
<rect x='383.81' y='676.60' width='0.90' height='4.00' fill='#7c7c7c' />
<rect x='392.17' y='676.60' width='0.90' height='4.00' fill='#8e8e8e' />
<rect x='400.53' y='676.60' width='0.90' height='4.00' fill='#7c7c7c' />
<rect x='408.89' y='676.60' width='0.90' height='4.00' fill='#7c7c7c' />
<rect x='417.24' y='676.60' width='0.90' height='4.00' fill='#7c7c7c' />
<rect x='425.60' y='676.60' width='0.90' height='4.00' fill='#7c7c7c' />
<rect x='433.96' y='676.60' width='0.90' height='4.00' fill='#8e8e8e' />
<rect x='442.31' y='676.60' width='0.90' height='4.00' fill='#7c7c7c' />
<rect x='450.67' y='676.60' width='0.90' height='4.00' fill='#7c7c7c' />
<rect x='459.03' y='676.60' width='0.90' height='4.00' fill='#7c7c7c' />
<rect x='467.38' y='676.60' width='0.90' height='4.00' fill='#7c7c7c' />
<rect x='475.74' y='676.60' width='0.90' height='4.00' fill='#8e8e8e' />
<rect x='484.10' y='676.60' width='0.90' height='4.00' fill='#7c7c7c' />
<rect x='492.46' y='676.60' width='0.90' height='4.00' fill='#7c7c7c' />
<rect x='500.81' y='676.60' width='0.90' height='4.00' fill='#7c7c7c' />
<rect x='509.17' y='676.60' width='0.90' height='4.00' fill='#7c7c7c' />
<rect x='517.53' y='676.60' width='0.90' height='4.00' fill='#8e8e8e' />
<rect x='525.88' y='676.60' width='0.90' height='4.00' fill='#7c7c7c' />
<rect x='534.24' y='676.60' width='0.90' height='4.00' fill='#7c7c7c' />
<rect x='542.60' y='676.60' width='0.90' height='4.00' fill='#7c7c7c' />
<rect x='550.95' y='676.60' width='0.90' height='4.00' fill='#7c7c7c' />
<rect x='559.31' y='676.60' width='0.90' height='4.00' fill='#8e8e8e' />
<rect x='567.67' y='676.60' width='0.90' height='4.00' fill='#7c7c7c' />
<rect x='576.03' y='676.60' width='0.90' height='4.00' fill='#7c7c7c' />
<rect x='584.38' y='676.60' width='0.90' height='4.00' fill='#7c7c7c' />
<rect x='592.74' y='676.60' width='0.90' height='4.00' fill='#7c7c7c' />
<rect x='601.10' y='676.60' width='0.90' height='4.00' fill='#8e8e8e' />
<rect x='609.45' y='676.60' width='0.90' height='4.00' fill='#7c7c7c' />
<rect x='617.81' y='676.60' width='0.90' height='4.00' fill='#7c7c7c' />
<rect x='626.17' y='676.60' width='0.90' height='4.00' fill='#7c7c7c' />
<rect x='634.52' y='676.60' width='0.90' height='4.00' fill='#7c7c7c' />
<rect x='642.88' y='676.60' width='0.90' height='4.00' fill='#8e8e8e' />
<rect x='651.24' y='676.60' width='0.90' height='4.00' fill='#7c7c7c' />
<rect x='659.60' y='676.60' width='0.90' height='4.00' fill='#7c7c7c' />
<rect x='667.95' y='676.60' width='0.90' height='4.00' fill='#7c7c7c' />
<rect x='676.31' y='676.60' width='0.90' height='4.00' fill='#7c7c7c' />
<rect x='684.67' y='676.60' width='0.90' height='4.00' fill='#8e8e8e' />
<rect x='693.02' y='676.60' width='0.90' height='4.00' fill='#7c7c7c' />
<rect x='701.38' y='676.60' width='0.90' height='4.00' fill='#7c7c7c' />
<rect x='709.74' y='676.60' width='0.90' height='4.00' fill='#7c7c7c' />
<rect x='718.09' y='676.60' width='0.90' height='4.00' fill='#7c7c7c' />
<rect x='726.45' y='676.60' width='0.90' height='4.00' fill='#8e8e8e' />
<rect x='734.81' y='676.60' width='0.90' height='4.00' fill='#7c7c7c' />
<rect x='743.17' y='676.60' width='0.90' height='4.00' fill='#7c7c7c' />
<rect x='751.52' y='676.60' width='0.90' height='4.00' fill='#7c7c7c' />
<rect x='759.88' y='676.60' width='0.90' height='4.00' fill='#7c7c7c' />
<rect x='768.24' y='676.60' width='0.90' height='4.00' fill='#8e8e8e' />
<rect x='776.59' y='676.60' width='0.90' height='4.00' fill='#7c7c7c' />
<rect x='784.95' y='676.60' width='0.90' height='4.00' fill='#7c7c7c' />
<rect x='793.31' y='676.60' width='0.90' height='4.00' fill='#7c7c7c' />
<rect x='491.60' y='417.40' width='1.80' height='259.80' fill='#f0e000' />
<rect x='0.00' y='691.80' width='800.00' height='9.20' fill='#484848' />
<rect x='655.00' y='692.60' width='40.60' height='7.60' fill='#8c8c8c' rx='3.6' />
<path d='M759.6 693.4 L764.8 696.4 L759.6 699.4 Z' fill='#8a8a8a'/>
<rect x='769.50' y='692.60' width='8.20' height='7.80' fill='#6a6a6a' />
<rect x='770.70' y='696.00' width='5.80' height='1.10' fill='#f0f0f0' />
<rect x='773.05' y='693.60' width='1.10' height='5.90' fill='#f0f0f0' />
<rect x='780.50' y='692.60' width='8.20' height='7.80' fill='#6a6a6a' />
<rect x='782.10' y='693.80' width='5.00' height='5.40' fill='#858585' />
<rect x='783.10' y='694.60' width='3.00' height='3.80' fill='#6f6f6f' />
<rect x='791.50' y='692.60' width='8.20' height='7.80' fill='#6a6a6a' />
<rect x='792.90' y='696.00' width='5.40' height='1.00' fill='#a0a0a0' />
</g>
<rect x='800.00' y='414.40' width='11.00' height='286.60' fill='#474747' />
<rect x='803.40' y='424.50' width='1.00' height='276.50' fill='#525252' />
<path d='M801.2 418.8 L806.5 421.4 L801.2 424.0 Z' fill='#cfcfcf'/>
<rect x='810.60' y='417.20' width='213.40' height='283.80' fill='#333333' />
<rect x='811.40' y='418.20' width='212.60' height='282.80' fill='#3c3c3c' />
<rect x='811.40' y='418.80' width='212.60' height='12.00' fill='#565656' />
<rect x='964.30' y='419.40' width='1.00' height='11.00' fill='#3e3e3e' /></svg>
<div class='t' style='left:6px;top:2px;color:#c8c8c8;transform:translate(0.00px,0.98px) rotate(0.03deg);'><span style="letter-spacing:0.022px;">Advanced Profiler</span></div><div class='t' style='left:1019.4px;top:2.8px;color:#2b2b2b;font-weight:bold;font-size:8.5px'>?</div><div class='t' style='left:11px;top:23px;color:#e0e0e0;transform:translate(0.30px,0.38px) rotate(0.03deg);'><span style="letter-spacing:-0.158px;">Voices Graph</span></div><div class='t' style='left:70px;top:23px;color:#a4a4a4;transform:translate(0.90px,0.38px) rotate(0.03deg);'><span style="letter-spacing:-0.103px;">Voices</span></div><div class='t' style='left:105px;top:23px;color:#a4a4a4;transform:translate(0.80px,0.38px) rotate(0.03deg);'><span style="letter-spacing:-0.461px;">Busses</span></div><div class='t' style='left:141px;top:23px;color:#a4a4a4;transform:translate(0.80px,0.38px) rotate(0.03deg);'><span style="letter-spacing:-0.320px;">Sends</span></div><div class='t' style='left:175px;top:23px;color:#a4a4a4;transform:translate(0.20px,0.38px) rotate(0.03deg);'><span style="letter-spacing:-0.015px;">Emitter-Listener</span></div><div class='t' style='left:246px;top:23px;color:#a4a4a4;transform:translate(0.30px,0.38px) rotate(0.03deg);'><span style="letter-spacing:0.146px;">Memory</span></div><div class='t' style='left:289px;top:23px;color:#a4a4a4;transform:translate(0.50px,0.38px) rotate(0.03deg);'><span style="letter-spacing:-0.205px;">Streams</span></div><div class='t' style='left:330px;top:23px;color:#a4a4a4;transform:translate(0.60px,0.38px) rotate(0.03deg);'><span style="letter-spacing:-0.107px;">Streaming Devices</span></div><div class='t' style='left:410px;top:23px;color:#a4a4a4;transform:translate(0.80px,0.38px) rotate(0.03deg);'><span style="letter-spacing:-0.659px;">CPU</span></div><div class='t' style='left:438px;top:23px;color:#a4a4a4;transform:translate(0.20px,0.38px) rotate(0.03deg);'><span style="letter-spacing:-0.043px;">Obs/Occ</span></div><div class='t' style='left:482px;top:23px;color:#a4a4a4;transform:translate(0.70px,0.38px) rotate(0.03deg);'><span style="letter-spacing:-0.166px;">Listeners</span></div><div class='t' style='left:527px;top:23px;color:#a4a4a4;transform:translate(0.10px,0.38px) rotate(0.03deg);'><span style="letter-spacing:-0.201px;">SoundBanks</span></div><div class='t' style='left:35px;top:44px;color:#707070;transform:translate(0.50px,0.08px) rotate(0.03deg);'><span style="letter-spacing:-0.115px;font-style:italic;">Text Filter</span></div><div class='t' style='left:845px;top:44px;color:#707070;transform:translate(0.00px,0.08px) rotate(0.03deg);'><span style="letter-spacing:-0.043px;font-style:italic;">Object Filter</span></div><div class='t' style='left:951.2px;top:44.0px;color:#e0e0e0;font-size:8px;letter-spacing:-0.2px'>...</div><div class='clip' style='clip-path:inset(61.2px 0px 314.8px 7.05px)'><div class='t' style='left:17px;top:55px;color:#dcdcdc;transform:translate(0.80px,0.90px) rotate(0.03deg);'><span style="letter-spacing:-0.388px;">AMB_SP_TankFire_LP_Play.A...</span></div><div class='t' style='left:17px;top:118px;color:#dcdcdc;transform:translate(0.80px,0.38px) rotate(0.03deg);'><span style="letter-spacing:-0.284px;">AV_Global_Ext</span></div><div class='t' style='left:17px;top:216px;color:#dcdcdc;transform:translate(0.80px,0.43px) rotate(0.03deg);'><span style="letter-spacing:-0.194px;">BP_Rifle_Character0.AkCom...</span></div><div class='t' style='left:17px;top:348px;color:#dcdcdc;transform:translate(0.80px,0.53px) rotate(0.03deg);'><span style="letter-spacing:-0.190px;">AV_Global_Hangar</span></div><div class='t' style='left:609px;top:225px;color:#dcdcdc;transform:translate(0.50px,0.58px) rotate(0.03deg);'><span style="letter-spacing:-0.143px;">PlayerCameraManager0.Ak...</span></div><div class='t' style='left:34px;top:73px;color:#eaeaea;transform:translate(0.20px,0.73px) rotate(0.03deg);'><span style="letter-spacing:-0.413px;">AMB_SP_TankFire_LP_Play</span></div><div class='t' style='left:330px;top:87px;color:#dadada;transform:translate(0.20px,0.03px) rotate(0.03deg);'><span style="letter-spacing:-0.426px;">6.0</span></div><div class='t' style='left:360px;top:87px;color:#dadada;transform:translate(0.65px,0.03px) rotate(0.03deg);'><span style="letter-spacing:-0.407px;">0</span></div><div class='t' style='left:384px;top:87px;color:#dadada;transform:translate(0.80px,0.03px) rotate(0.03deg);'><span style="letter-spacing:-0.407px;">0</span></div><div class='t' style='left:330px;top:73px;color:#eaeaea;transform:translate(0.20px,0.68px) rotate(0.03deg);'><span style="letter-spacing:-0.410px;">AMB_SP_TankFire_LP</span></div><div class='t' style='left:34px;top:136px;color:#eaeaea;transform:translate(0.20px,0.83px) rotate(0.03deg);'><span style="letter-spacing:-0.077px;">AMB_Global_DayToNight...</span></div><div class='t' style='left:182px;top:136px;color:#eaeaea;transform:translate(0.20px,0.83px) rotate(0.03deg);'><span style="letter-spacing:-0.020px;">AMB_Global_DayToNight</span></div><div class='t' style='left:330px;top:150px;color:#dadada;transform:translate(0.20px,0.31px) rotate(0.03deg);'><span style="letter-spacing:-0.208px;">-18.0</span></div><div class='t' style='left:367px;top:150px;color:#dadada;transform:translate(0.90px,0.31px) rotate(0.03deg);'><span style="letter-spacing:-0.407px;">0</span></div><div class='t' style='left:392px;top:150px;color:#dadada;transform:translate(0.30px,0.31px) rotate(0.03deg);'><span style="letter-spacing:-0.407px;">0</span></div><div class='t' style='left:330px;top:136px;color:#eaeaea;transform:translate(0.20px,0.91px) rotate(0.03deg);'><span style="letter-spacing:-0.308px;">AMB_Global_Day_LP</span></div><div class='t' style='left:330px;top:184px;color:#dadada;transform:translate(0.20px,0.60px) rotate(0.03deg);'><span style="letter-spacing:0.655px;">-∞</span></div><div class='t' style='left:360px;top:184px;color:#dadada;transform:translate(0.65px,0.60px) rotate(0.03deg);'><span style="letter-spacing:-0.407px;">0</span></div><div class='t' style='left:384px;top:184px;color:#dadada;transform:translate(0.80px,0.60px) rotate(0.03deg);'><span style="letter-spacing:-0.407px;">0</span></div><div class='t' style='left:330px;top:171px;color:#eaeaea;transform:translate(0.20px,0.46px) rotate(0.03deg);'><span style="letter-spacing:-0.167px;">AMB_Global_Night_LP</span></div><div class='t' style='left:503px;top:177px;color:#dadada;transform:translate(0.20px,0.18px) rotate(0.03deg);'><span style="letter-spacing:-0.162px;">-0.0</span></div><div class='t' style='left:490px;top:150px;color:#ececec;transform:translate(0.60px,0.48px) rotate(0.03deg);'><span style="letter-spacing:-0.140px;">Wwise RoomVerb</span></div><div class='t' style='left:490px;top:164px;color:#ececec;transform:translate(0.60px,0.08px) rotate(0.03deg);'><span style="letter-spacing:-0.173px;">Wwise Delay</span></div><div class='t' style='left:503px;top:136px;color:#f2f2f2;transform:translate(0.60px,0.88px) rotate(0.03deg);'><span style="letter-spacing:-0.575px;">RVB_Ext</span></div><div class='t' style='left:625px;top:150px;color:#dadada;transform:translate(0.70px,0.48px) rotate(0.03deg);'><span style="letter-spacing:-0.162px;">-0.0</span></div><div class='t' style='left:625px;top:136px;color:#ececec;transform:translate(0.90px,0.68px) rotate(0.03deg);'><span style="letter-spacing:0.043px;">Master Audio Bus</span></div><div class='t' style='left:625px;top:257px;color:#dadada;transform:translate(0.80px,0.48px) rotate(0.03deg);'><span style="letter-spacing:-0.162px;">-0.0</span></div><div class='t' style='left:626px;top:243px;color:#ececec;transform:translate(0.00px,0.68px) rotate(0.03deg);'><span style="letter-spacing:0.043px;">Master Audio Bus</span></div><div class='t' style='left:770px;top:60px;color:#ececec;transform:translate(0.70px,0.08px) rotate(0.03deg);'><span style="letter-spacing:-0.280px;">System (2726438472)</span></div><div class='t' style='left:34px;top:234px;color:#eaeaea;transform:translate(0.20px,0.88px) rotate(0.03deg);'><span style="letter-spacing:-0.222px;">MC_Weapon_Shots_Play</span></div><div class='t' style='left:34px;top:256px;color:#eaeaea;transform:translate(0.20px,0.13px) rotate(0.03deg);'><span style="letter-spacing:-0.141px;">FOL_MC_Outfits_Interact...</span></div><div class='t' style='left:34px;top:277px;color:#eaeaea;transform:translate(0.20px,0.38px) rotate(0.03deg);'><span style="letter-spacing:-0.255px;">MC_Weapon_Reload_In_...</span></div><div class='t' style='left:182px;top:234px;color:#eaeaea;transform:translate(0.45px,0.88px) rotate(0.03deg);'><span style="letter-spacing:-0.316px;">SFX_MC_Weapon_Shots</span></div><div class='t' style='left:182px;top:256px;color:#eaeaea;transform:translate(0.45px,0.13px) rotate(0.03deg);'><span style="letter-spacing:-0.143px;">FOL_MC_Outfits_Interact</span></div><div class='t' style='left:182px;top:277px;color:#eaeaea;transform:translate(0.45px,0.38px) rotate(0.03deg);'><span style="letter-spacing:-0.354px;">SFX_MC_Weapon_Reloa...</span></div><div class='t' style='left:330px;top:247px;color:#dadada;transform:translate(0.45px,0.73px) rotate(0.03deg);'><span style="letter-spacing:-0.208px;">-14.8</span></div><div class='t' style='left:368px;top:247px;color:#dadada;transform:translate(0.90px,0.73px) rotate(0.03deg);'><span style="letter-spacing:-0.407px;">0</span></div><div class='t' style='left:392px;top:247px;color:#dadada;transform:translate(0.05px,0.73px) rotate(0.03deg);'><span style="letter-spacing:-0.407px;">0</span></div><div class='t' style='left:330px;top:234px;color:#eaeaea;transform:translate(0.45px,0.53px) rotate(0.03deg);'><span style="letter-spacing:-0.215px;">MC_Weapon_Shot_03</span></div><div class='t' style='left:330px;top:282px;color:#dadada;transform:translate(0.45px,0.63px) rotate(0.03deg);'><span style="letter-spacing:-0.208px;">-25.9</span></div><div class='t' style='left:368px;top:282px;color:#dadada;transform:translate(0.90px,0.63px) rotate(0.03deg);'><span style="letter-spacing:-0.407px;">0</span></div><div class='t' style='left:392px;top:282px;color:#dadada;transform:translate(0.05px,0.63px) rotate(0.03deg);'><span style="letter-spacing:-0.407px;">0</span></div><div class='t' style='left:330px;top:269px;color:#eaeaea;transform:translate(0.45px,0.38px) rotate(0.03deg);'><span style="letter-spacing:-0.149px;">FOL_MC_Outfit_Interact_...</span></div><div class='t' style='left:330px;top:317px;color:#dadada;transform:translate(0.45px,0.63px) rotate(0.03deg);'><span style="letter-spacing:-0.208px;">-10.4</span></div><div class='t' style='left:368px;top:317px;color:#dadada;transform:translate(0.90px,0.63px) rotate(0.03deg);'><span style="letter-spacing:-0.407px;">0</span></div><div class='t' style='left:392px;top:317px;color:#dadada;transform:translate(0.05px,0.63px) rotate(0.03deg);'><span style="letter-spacing:-0.407px;">0</span></div><div class='t' style='left:330px;top:304px;color:#eaeaea;transform:translate(0.45px,0.13px) rotate(0.03deg);'><span style="letter-spacing:-0.210px;">MC_Weapon_Load_Out_07</span></div><div class='t' style='left:34px;top:367px;color:#eaeaea;transform:translate(0.20px,0.13px) rotate(0.03deg);'><span style="letter-spacing:-0.220px;">AMB_Global_Hangar_LP_...</span></div><div class='t' style='left:330px;top:380px;color:#dadada;transform:translate(0.60px,0.43px) rotate(0.03deg);'><span style="letter-spacing:-0.162px;">-6.0</span></div><div class='t' style='left:365px;top:380px;color:#dadada;transform:translate(0.15px,0.43px) rotate(0.03deg);'><span style="letter-spacing:-0.407px;">0</span></div><div class='t' style='left:388px;top:380px;color:#dadada;transform:translate(0.50px,0.43px) rotate(0.03deg);'><span style="letter-spacing:-0.407px;">0</span></div><div class='t' style='left:330px;top:367px;color:#eaeaea;transform:translate(0.60px,0.08px) rotate(0.03deg);'><span style="letter-spacing:-0.235px;">AMB_Global_Hangar_LP</span></div></div><div class='t' style='left:1019.4px;top:400px;color:#2b2b2b;font-weight:bold;font-size:8.5px'>?</div><div class='clip' style='clip-path:inset(417.6px 224.0px 0px 0px)'><div class='t' style='left:0px;top:680px;color:#9a9a9a;transform:translate(0.30px,0.18px) rotate(0.03deg);'><span style="letter-spacing:-0.417px;font-size:7.0px;">0:36:34.000</span></div><div class='t' style='left:42px;top:680px;color:#9a9a9a;transform:translate(0.05px,0.18px) rotate(0.03deg);'><span style="letter-spacing:-0.417px;font-size:7.0px;">0:36:34.500</span></div><div class='t' style='left:83px;top:680px;color:#9a9a9a;transform:translate(0.80px,0.18px) rotate(0.03deg);'><span style="letter-spacing:-0.417px;font-size:7.0px;">0:36:35.000</span></div><div class='t' style='left:125px;top:680px;color:#9a9a9a;transform:translate(0.55px,0.18px) rotate(0.03deg);'><span style="letter-spacing:-0.417px;font-size:7.0px;">0:36:35.500</span></div><div class='t' style='left:167px;top:680px;color:#9a9a9a;transform:translate(0.30px,0.18px) rotate(0.03deg);'><span style="letter-spacing:-0.417px;font-size:7.0px;">0:36:36.000</span></div><div class='t' style='left:209px;top:680px;color:#9a9a9a;transform:translate(0.05px,0.18px) rotate(0.03deg);'><span style="letter-spacing:-0.417px;font-size:7.0px;">0:36:36.500</span></div><div class='t' style='left:250px;top:680px;color:#9a9a9a;transform:translate(0.80px,0.18px) rotate(0.03deg);'><span style="letter-spacing:-0.417px;font-size:7.0px;">0:36:37.000</span></div><div class='t' style='left:292px;top:680px;color:#9a9a9a;transform:translate(0.55px,0.18px) rotate(0.03deg);'><span style="letter-spacing:-0.417px;font-size:7.0px;">0:36:37.500</span></div><div class='t' style='left:334px;top:680px;color:#9a9a9a;transform:translate(0.30px,0.18px) rotate(0.03deg);'><span style="letter-spacing:-0.417px;font-size:7.0px;">0:36:38.000</span></div><div class='t' style='left:376px;top:680px;color:#9a9a9a;transform:translate(0.05px,0.18px) rotate(0.03deg);'><span style="letter-spacing:-0.417px;font-size:7.0px;">0:36:38.500</span></div><div class='t' style='left:417px;top:680px;color:#9a9a9a;transform:translate(0.80px,0.18px) rotate(0.03deg);'><span style="letter-spacing:-0.417px;font-size:7.0px;">0:36:39.000</span></div><div class='t' style='left:459px;top:680px;color:#9a9a9a;transform:translate(0.55px,0.18px) rotate(0.03deg);'><span style="letter-spacing:-0.417px;font-size:7.0px;">0:36:39.500</span></div><div class='t' style='left:501px;top:680px;color:#9a9a9a;transform:translate(0.30px,0.18px) rotate(0.03deg);'><span style="letter-spacing:-0.417px;font-size:7.0px;">0:36:40.000</span></div><div class='t' style='left:543px;top:680px;color:#9a9a9a;transform:translate(0.05px,0.18px) rotate(0.03deg);'><span style="letter-spacing:-0.417px;font-size:7.0px;">0:36:40.500</span></div><div class='t' style='left:584px;top:680px;color:#9a9a9a;transform:translate(0.80px,0.18px) rotate(0.03deg);'><span style="letter-spacing:-0.417px;font-size:7.0px;">0:36:41.000</span></div><div class='t' style='left:626px;top:680px;color:#9a9a9a;transform:translate(0.55px,0.18px) rotate(0.03deg);'><span style="letter-spacing:-0.417px;font-size:7.0px;">0:36:41.500</span></div><div class='t' style='left:668px;top:680px;color:#9a9a9a;transform:translate(0.30px,0.18px) rotate(0.03deg);'><span style="letter-spacing:-0.417px;font-size:7.0px;">0:36:42.000</span></div><div class='t' style='left:710px;top:680px;color:#9a9a9a;transform:translate(0.05px,0.18px) rotate(0.03deg);'><span style="letter-spacing:-0.417px;font-size:7.0px;">0:36:42.500</span></div><div class='t' style='left:751px;top:680px;color:#9a9a9a;transform:translate(0.80px,0.18px) rotate(0.03deg);'><span style="letter-spacing:-0.417px;font-size:7.0px;">0:36:43.000</span></div><div class='t' style='left:793px;top:680px;color:#9a9a9a;transform:translate(0.55px,0.18px) rotate(0.03deg);'><span style="letter-spacing:-0.417px;font-size:7.0px;">0:36:43.500</span></div></div><div class='t' style='left:814px;top:418px;color:#d2d2d2;transform:translate(0.90px,0.58px) rotate(0.03deg);'><span style="letter-spacing:0.044px;">Name</span></div><div class='t' style='left:968px;top:418px;color:#d2d2d2;transform:translate(0.20px,0.58px) rotate(0.03deg);'><span style="letter-spacing:-0.183px;">Value</span></div><div class='t' style='left:815px;top:432px;color:#d8d8d8;transform:translate(0.50px,0.48px) rotate(0.03deg);'><span style="letter-spacing:-0.187px;">API calls</span></div><div class='t' style='left:968px;top:432px;color:#d8d8d8;transform:translate(0.60px,0.48px) rotate(0.03deg);'><span style="letter-spacing:0.614px;">-</span></div><div class='t' style='left:815px;top:445px;color:#d8d8d8;transform:translate(0.50px,0.95px) rotate(0.03deg);'><span style="letter-spacing:-0.063px;">Command Queue Size</span></div><div class='t' style='left:968px;top:445px;color:#d8d8d8;transform:translate(0.60px,0.95px) rotate(0.03deg);'><span style="letter-spacing:-0.306px;">512 Bytes</span></div><div class='t' style='left:815px;top:459px;color:#d8d8d8;transform:translate(0.50px,0.43px) rotate(0.03deg);'><span style="letter-spacing:-0.013px;">Command Queue Used</span></div><div class='t' style='left:968px;top:459px;color:#d8d8d8;transform:translate(0.60px,0.43px) rotate(0.03deg);'><span style="letter-spacing:-0.353px;">0.20 %</span></div><div class='t' style='left:815px;top:472px;color:#d8d8d8;transform:translate(0.50px,0.90px) rotate(0.03deg);'><span style="letter-spacing:0.053px;">CPU - Plug-in Total</span></div><div class='t' style='left:968px;top:472px;color:#d8d8d8;transform:translate(0.60px,0.90px) rotate(0.03deg);'><span style="letter-spacing:-0.353px;">1.93 %</span></div><div class='t' style='left:815px;top:486px;color:#d8d8d8;transform:translate(0.50px,0.38px) rotate(0.03deg);'><span style="letter-spacing:0.008px;">CPU - Total</span></div><div class='t' style='left:968px;top:486px;color:#d8d8d8;transform:translate(0.60px,0.38px) rotate(0.03deg);'><span style="letter-spacing:-0.353px;">3.30 %</span></div><div class='t' style='left:815px;top:499px;color:#d8d8d8;transform:translate(0.50px,0.85px) rotate(0.03deg);'><span style="letter-spacing:-0.028px;">Loaded Banks (Memory)</span></div><div class='t' style='left:968px;top:499px;color:#d8d8d8;transform:translate(0.60px,0.85px) rotate(0.03deg);'><span style="letter-spacing:-0.215px;">89.7 MB</span></div><div class='t' style='left:815px;top:513px;color:#d8d8d8;transform:translate(0.50px,0.33px) rotate(0.03deg);'><span style="letter-spacing:-0.006px;">Loudness Momentary/Sync Group 1</span></div><div class='t' style='left:968px;top:513px;color:#d8d8d8;transform:translate(0.60px,0.33px) rotate(0.03deg);'><span style="letter-spacing:0.614px;">-</span></div><div class='t' style='left:815px;top:526px;color:#d8d8d8;transform:translate(0.50px,0.81px) rotate(0.03deg);'><span style="letter-spacing:0.017px;">Loudness Short-term/Sync Group 1</span></div><div class='t' style='left:968px;top:526px;color:#d8d8d8;transform:translate(0.60px,0.81px) rotate(0.03deg);'><span style="letter-spacing:0.614px;">-</span></div><div class='t' style='left:815px;top:540px;color:#d8d8d8;transform:translate(0.50px,0.28px) rotate(0.03deg);'><span style="letter-spacing:0.048px;">Number of Active Events</span></div><div class='t' style='left:968px;top:540px;color:#d8d8d8;transform:translate(0.60px,0.28px) rotate(0.03deg);'><span style="letter-spacing:-0.399px;">10</span></div><div class='t' style='left:815px;top:553px;color:#d8d8d8;transform:translate(0.50px,0.75px) rotate(0.03deg);'><span style="letter-spacing:0.030px;">Number of Active Sends</span></div><div class='t' style='left:968px;top:553px;color:#d8d8d8;transform:translate(0.60px,0.75px) rotate(0.03deg);'><span style="letter-spacing:-0.407px;">6</span></div><div class='t' style='left:815px;top:567px;color:#d8d8d8;transform:translate(0.50px,0.23px) rotate(0.03deg);'><span style="letter-spacing:0.003px;">Number of Audio Objects Used (Syst...</span></div><div class='t' style='left:968px;top:567px;color:#d8d8d8;transform:translate(0.60px,0.23px) rotate(0.03deg);'><span style="letter-spacing:-0.407px;">0</span></div><div class='t' style='left:815px;top:580px;color:#d8d8d8;transform:translate(0.50px,0.71px) rotate(0.03deg);'><span style="letter-spacing:-0.041px;">Number of Prepared Events</span></div><div class='t' style='left:968px;top:580px;color:#d8d8d8;transform:translate(0.60px,0.71px) rotate(0.03deg);'><span style="letter-spacing:-0.407px;">0</span></div><div class='t' style='left:815px;top:594px;color:#d8d8d8;transform:translate(0.50px,0.18px) rotate(0.03deg);'><span style="letter-spacing:0.002px;">Number of Registered Objects</span></div><div class='t' style='left:968px;top:594px;color:#d8d8d8;transform:translate(0.60px,0.18px) rotate(0.03deg);'><span style="letter-spacing:-0.399px;">45</span></div><div class='t' style='left:815px;top:607px;color:#d8d8d8;transform:translate(0.50px,0.65px) rotate(0.03deg);'><span style="letter-spacing:-0.012px;">Number of State Transitions</span></div><div class='t' style='left:968px;top:607px;color:#d8d8d8;transform:translate(0.60px,0.65px) rotate(0.03deg);'><span style="letter-spacing:-0.407px;">0</span></div><div class='t' style='left:815px;top:621px;color:#d8d8d8;transform:translate(0.50px,0.13px) rotate(0.03deg);'><span style="letter-spacing:0.029px;">Number of Streams</span></div><div class='t' style='left:968px;top:621px;color:#d8d8d8;transform:translate(0.60px,0.13px) rotate(0.03deg);'><span style="letter-spacing:-0.407px;">0</span></div><div class='t' style='left:815px;top:634px;color:#d8d8d8;transform:translate(0.50px,0.61px) rotate(0.03deg);'><span style="letter-spacing:0.026px;">Number of Streams (Active)</span></div><div class='t' style='left:968px;top:634px;color:#d8d8d8;transform:translate(0.60px,0.61px) rotate(0.03deg);'><span style="letter-spacing:-0.407px;">0</span></div><div class='t' style='left:815px;top:648px;color:#d8d8d8;transform:translate(0.50px,0.08px) rotate(0.03deg);'><span style="letter-spacing:0.103px;">Number of Transitions/Interpolations</span></div><div class='t' style='left:968px;top:648px;color:#d8d8d8;transform:translate(0.60px,0.08px) rotate(0.03deg);'><span style="letter-spacing:-0.407px;">0</span></div><div class='t' style='left:815px;top:661px;color:#d8d8d8;transform:translate(0.50px,0.55px) rotate(0.03deg);'><span style="letter-spacing:-0.019px;">Number of Voices (Physical)</span></div><div class='t' style='left:968px;top:661px;color:#d8d8d8;transform:translate(0.60px,0.55px) rotate(0.03deg);'><span style="letter-spacing:-0.087px;">11</span></div><div class='t' style='left:815px;top:675px;color:#d8d8d8;transform:translate(0.50px,0.03px) rotate(0.03deg);'><span style="letter-spacing:0.017px;">Number of Voices (Total)</span></div><div class='t' style='left:968px;top:675px;color:#d8d8d8;transform:translate(0.60px,0.03px) rotate(0.03deg);'><span style="letter-spacing:-0.087px;">11</span></div><div class='t' style='left:815px;top:688px;color:#d8d8d8;transform:translate(0.50px,0.50px) rotate(0.03deg);'><span style="letter-spacing:0.050px;">Number of Voices (Virtual)</span></div><div class='t' style='left:968px;top:688px;color:#d8d8d8;transform:translate(0.60px,0.50px) rotate(0.03deg);'><span style="letter-spacing:-0.407px;">0</span></div>
</body></html>
